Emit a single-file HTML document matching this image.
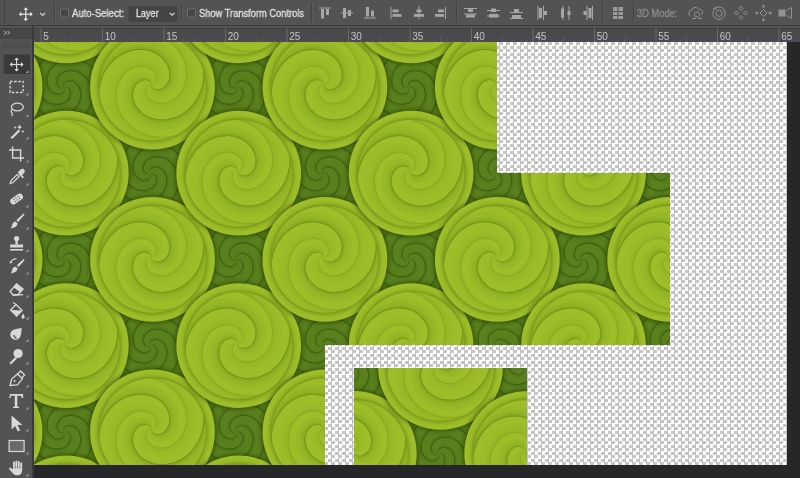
<!DOCTYPE html><html><head><meta charset="utf-8"><style>
html,body{margin:0;padding:0;width:800px;height:478px;overflow:hidden;background:#27272a;position:relative;font-family:"Liberation Sans",sans-serif}
.abs{position:absolute}
.chk{position:absolute;background:repeating-conic-gradient(#c4c4c4 0 25%,#ffffff 0 50%) 0 0/7px 7px}
</style></head><body>
<div class="abs" style="left:0;top:0;width:800px;height:25px;background:#535353"></div>
<div class="abs" style="left:0;top:25px;width:800px;height:1px;background:#3c3c3c"></div>
<div class="abs" style="left:0;top:26px;width:800px;height:2px;background:#555555"></div>
<div class="abs" style="left:0;top:28px;width:800px;height:1px;background:#3f3f3f"></div>
<div class="abs" style="left:34px;top:29px;width:766px;height:13px;background:#4a4a4a"></div>
<div class="abs" style="left:34px;top:36px;width:766px;height:2px;background:#4a4a52"></div>
<div class="abs" style="left:34px;top:40px;width:766px;height:2px;background:#49494f"></div>
<div class="abs" style="left:0;top:29px;width:33px;height:10px;background:#474747"></div>
<div class="abs" style="left:0;top:39px;width:32px;height:439px;background:#535353"></div>
<div class="abs" style="left:32px;top:26px;width:2px;height:452px;background:#3a3a3a"></div>
<svg width="800" height="25" style="position:absolute;left:0;top:0">
<rect x="4" y="1" width="1" height="23" fill="#404040"/>
<rect x="54" y="3" width="1" height="19" fill="#424242"/><rect x="55" y="3" width="1" height="19" fill="#5c5c5c"/>
<rect x="181" y="3" width="1" height="19" fill="#424242"/><rect x="182" y="3" width="1" height="19" fill="#5c5c5c"/>
<rect x="311" y="3" width="1" height="19" fill="#424242"/><rect x="312" y="3" width="1" height="19" fill="#5c5c5c"/>
<rect x="456" y="3" width="1" height="19" fill="#424242"/><rect x="457" y="3" width="1" height="19" fill="#5c5c5c"/>
<rect x="602" y="3" width="1" height="19" fill="#424242"/><rect x="603" y="3" width="1" height="19" fill="#5c5c5c"/>
<rect x="633" y="3" width="1" height="19" fill="#424242"/><rect x="634" y="3" width="1" height="19" fill="#5c5c5c"/>
<g fill="#e6e6e6"><rect x="19.8" y="13.6" width="12" height="1.2"/><rect x="25.2" y="8.2" width="1.2" height="12"/><path d="M18.8 14.2l2.6-2.4v4.8z M32.8 14.2l-2.6-2.4v4.8z M25.8 7.199999999999999l-2.4 2.6h4.8z M25.8 21.2l-2.4-2.6h4.8z"/></g>
<path d="M40.2 13l2.5 2.5 2.5-2.5" stroke="#cfcfcf" stroke-width="1.2" fill="none"/>
<rect x="60.5" y="9" width="8" height="8" rx="1" fill="#454545" stroke="#6e6e6e" stroke-width="1"/>
<rect x="187.5" y="9" width="8" height="8" rx="1" fill="#454545" stroke="#6e6e6e" stroke-width="1"/>
<rect x="128.5" y="6" width="49" height="16" rx="1.5" fill="#444444" stroke="#4c4c4c"/>
<path d="M169.8 12.8l2.4 2.4 2.4-2.4" stroke="#d6d6d6" stroke-width="1.2" fill="none"/>
<g fill="#a6a6a6"><rect x="319" y="7.5" width="12" height="1"/><rect x="321" y="9" width="3" height="9.5"/><rect x="326" y="9" width="3" height="6"/><rect x="341" y="12.5" width="12" height="1"/><rect x="343" y="8" width="3" height="10"/><rect x="348" y="10" width="3" height="6"/><rect x="364" y="17.5" width="12" height="1"/><rect x="366" y="7" width="3" height="9.5"/><rect x="371" y="10.5" width="3" height="6"/><rect x="390.5" y="7" width="1" height="12"/><rect x="392.5" y="9.5" width="6" height="2.8"/><rect x="392.5" y="14" width="9" height="2.8"/><rect x="418.5" y="6" width="1" height="13"/><rect x="416.5" y="9.5" width="5" height="2.8"/><rect x="414" y="14" width="10" height="2.8"/><rect x="445" y="7" width="1" height="12"/><rect x="438" y="9.5" width="6" height="2.8"/><rect x="435" y="14" width="9" height="2.8"/><rect x="464" y="8" width="13" height="1"/><rect x="468" y="9" width="5" height="3"/><rect x="464" y="13.5" width="13" height="1"/><rect x="466" y="14.5" width="9" height="3"/><rect x="487" y="10" width="13" height="1"/><rect x="491" y="8.5" width="5" height="3.5"/><rect x="487" y="15.5" width="13" height="1"/><rect x="489" y="14" width="9" height="3.5"/><rect x="510" y="12" width="13" height="1"/><rect x="514" y="9" width="5" height="3"/><rect x="510" y="18" width="13" height="1"/><rect x="512" y="15" width="9" height="3"/><rect x="537.5" y="6" width="1" height="14"/><rect x="539" y="8" width="3" height="10"/><rect x="543" y="6" width="1" height="14"/><rect x="544" y="11" width="3" height="4"/><rect x="562.5" y="6" width="1" height="14"/><rect x="561" y="8.5" width="3" height="9"/><rect x="568.5" y="6" width="1" height="14"/><rect x="567.5" y="11" width="3" height="4"/><rect x="592" y="6" width="1" height="14"/><rect x="588.5" y="8" width="3" height="10"/><rect x="586.5" y="6" width="1" height="14"/><rect x="583.5" y="11" width="3" height="4"/><rect x="613" y="7" width="10" height="12" fill="#9a9a9a"/><rect x="617.5" y="7" width="1" height="12" fill="#535353"/><rect x="613" y="11" width="10" height="1" fill="#535353"/><rect x="613" y="15" width="10" height="1" fill="#535353"/></g>
<g fill="none" stroke="#929292" stroke-width="1"><path d="M690.5 16a3.2 3.2 0 0 1 1.2-6a3.8 3.8 0 0 1 7-0.5a3 3 0 0 1 2.8 5.2"/><circle cx="697" cy="14.5" r="2.6"/><path d="M692 18.5h4 M698 18.5h4"/><circle cx="719" cy="13.2" r="6.2"/><circle cx="719" cy="13.2" r="3.2"/><path d="M713.5 8.5l2.5 0.5-0.5-2.5"/><path d="M741 6.5l2 2-2 2-2-2z M741 15.5l2 2-2 2-2-2z M736.5 11l2 2-2 2-2-2z M745.5 11l2 2-2 2-2-2z"/><path d="M763.5 9.5l3.5 3.5-3.5 3.5-3.5-3.5z M763.5 5v3 M763.5 18v3 M756 13h3 M768 13h3"/><path d="M786.5 10.5l5-3v11l-5-3"/></g>
<g fill="#929292"><path d="M763.5 4.5l-2 2h4z M763.5 21.5l-2-2h4z M755 13l2-2v4z M772 13l-2-2v4z"/><rect x="778.5" y="9.5" width="7" height="7"/></g>
</svg>
<div style="will-change:transform;position:absolute;left:72px;top:8.5px;-webkit-text-stroke:0.3px #e2e2e2;font-size:10px;line-height:10px;color:#e2e2e2;white-space:nowrap;transform-origin:0 0;transform:scaleX(0.9541);">Auto-Select:</div>
<div style="will-change:transform;position:absolute;left:136px;top:9.0px;-webkit-text-stroke:0.3px #e2e2e2;font-size:10px;line-height:10px;color:#e2e2e2;white-space:nowrap;transform-origin:0 0;transform:scaleX(0.9000);">Layer</div>
<div style="will-change:transform;position:absolute;left:198.7px;top:8.5px;-webkit-text-stroke:0.3px #e2e2e2;font-size:10px;line-height:10px;color:#e2e2e2;white-space:nowrap;transform-origin:0 0;transform:scaleX(0.9309);">Show Transform Controls</div>
<div style="will-change:transform;position:absolute;left:636.5px;top:8.5px;-webkit-text-stroke:0.3px #8e8e8e;font-size:10px;line-height:10px;color:#8e8e8e;white-space:nowrap;transform-origin:0 0;transform:scaleX(0.9309);">3D Mode:</div>
<svg width="33" height="13" style="position:absolute;left:0;top:26px"><path d="M4.3 5l1.8 1.8-1.8 1.8 M7.6 5l1.8 1.8-1.8 1.8" stroke="#c8c8c8" stroke-width="1" fill="none"/></svg>
<svg width="766" height="16" style="position:absolute;left:34px;top:26px;will-change:transform" viewBox="34 26 766 16">
<rect x="34.35" y="39" width="1" height="3" fill="#575757"/>
<rect x="40.50" y="28" width="1" height="14" fill="#6a6a6a"/>
<rect x="46.65" y="39" width="1" height="3" fill="#575757"/>
<rect x="52.80" y="39" width="1" height="3" fill="#575757"/>
<rect x="58.95" y="39" width="1" height="3" fill="#575757"/>
<rect x="65.10" y="39" width="1" height="3" fill="#575757"/>
<rect x="71.25" y="37" width="1" height="5" fill="#5c5c5c"/>
<rect x="77.40" y="39" width="1" height="3" fill="#575757"/>
<rect x="83.55" y="39" width="1" height="3" fill="#575757"/>
<rect x="89.70" y="39" width="1" height="3" fill="#575757"/>
<rect x="95.85" y="39" width="1" height="3" fill="#575757"/>
<text x="43.2" y="40" font-family="Liberation Sans" font-size="10" fill="#c4c4c4">5</text>
<rect x="102.00" y="28" width="1" height="14" fill="#6a6a6a"/>
<rect x="108.15" y="39" width="1" height="3" fill="#575757"/>
<rect x="114.30" y="39" width="1" height="3" fill="#575757"/>
<rect x="120.45" y="39" width="1" height="3" fill="#575757"/>
<rect x="126.60" y="39" width="1" height="3" fill="#575757"/>
<rect x="132.75" y="37" width="1" height="5" fill="#5c5c5c"/>
<rect x="138.90" y="39" width="1" height="3" fill="#575757"/>
<rect x="145.05" y="39" width="1" height="3" fill="#575757"/>
<rect x="151.20" y="39" width="1" height="3" fill="#575757"/>
<rect x="157.35" y="39" width="1" height="3" fill="#575757"/>
<text x="104.7" y="40" font-family="Liberation Sans" font-size="10" fill="#c4c4c4">10</text>
<rect x="163.50" y="28" width="1" height="14" fill="#6a6a6a"/>
<rect x="169.65" y="39" width="1" height="3" fill="#575757"/>
<rect x="175.80" y="39" width="1" height="3" fill="#575757"/>
<rect x="181.95" y="39" width="1" height="3" fill="#575757"/>
<rect x="188.10" y="39" width="1" height="3" fill="#575757"/>
<rect x="194.25" y="37" width="1" height="5" fill="#5c5c5c"/>
<rect x="200.40" y="39" width="1" height="3" fill="#575757"/>
<rect x="206.55" y="39" width="1" height="3" fill="#575757"/>
<rect x="212.70" y="39" width="1" height="3" fill="#575757"/>
<rect x="218.85" y="39" width="1" height="3" fill="#575757"/>
<text x="166.2" y="40" font-family="Liberation Sans" font-size="10" fill="#c4c4c4">15</text>
<rect x="225.00" y="28" width="1" height="14" fill="#6a6a6a"/>
<rect x="231.15" y="39" width="1" height="3" fill="#575757"/>
<rect x="237.30" y="39" width="1" height="3" fill="#575757"/>
<rect x="243.45" y="39" width="1" height="3" fill="#575757"/>
<rect x="249.60" y="39" width="1" height="3" fill="#575757"/>
<rect x="255.75" y="37" width="1" height="5" fill="#5c5c5c"/>
<rect x="261.90" y="39" width="1" height="3" fill="#575757"/>
<rect x="268.05" y="39" width="1" height="3" fill="#575757"/>
<rect x="274.20" y="39" width="1" height="3" fill="#575757"/>
<rect x="280.35" y="39" width="1" height="3" fill="#575757"/>
<text x="227.7" y="40" font-family="Liberation Sans" font-size="10" fill="#c4c4c4">20</text>
<rect x="286.50" y="28" width="1" height="14" fill="#6a6a6a"/>
<rect x="292.65" y="39" width="1" height="3" fill="#575757"/>
<rect x="298.80" y="39" width="1" height="3" fill="#575757"/>
<rect x="304.95" y="39" width="1" height="3" fill="#575757"/>
<rect x="311.10" y="39" width="1" height="3" fill="#575757"/>
<rect x="317.25" y="37" width="1" height="5" fill="#5c5c5c"/>
<rect x="323.40" y="39" width="1" height="3" fill="#575757"/>
<rect x="329.55" y="39" width="1" height="3" fill="#575757"/>
<rect x="335.70" y="39" width="1" height="3" fill="#575757"/>
<rect x="341.85" y="39" width="1" height="3" fill="#575757"/>
<text x="289.2" y="40" font-family="Liberation Sans" font-size="10" fill="#c4c4c4">25</text>
<rect x="348.00" y="28" width="1" height="14" fill="#6a6a6a"/>
<rect x="354.15" y="39" width="1" height="3" fill="#575757"/>
<rect x="360.30" y="39" width="1" height="3" fill="#575757"/>
<rect x="366.45" y="39" width="1" height="3" fill="#575757"/>
<rect x="372.60" y="39" width="1" height="3" fill="#575757"/>
<rect x="378.75" y="37" width="1" height="5" fill="#5c5c5c"/>
<rect x="384.90" y="39" width="1" height="3" fill="#575757"/>
<rect x="391.05" y="39" width="1" height="3" fill="#575757"/>
<rect x="397.20" y="39" width="1" height="3" fill="#575757"/>
<rect x="403.35" y="39" width="1" height="3" fill="#575757"/>
<text x="350.7" y="40" font-family="Liberation Sans" font-size="10" fill="#c4c4c4">30</text>
<rect x="409.50" y="28" width="1" height="14" fill="#6a6a6a"/>
<rect x="415.65" y="39" width="1" height="3" fill="#575757"/>
<rect x="421.80" y="39" width="1" height="3" fill="#575757"/>
<rect x="427.95" y="39" width="1" height="3" fill="#575757"/>
<rect x="434.10" y="39" width="1" height="3" fill="#575757"/>
<rect x="440.25" y="37" width="1" height="5" fill="#5c5c5c"/>
<rect x="446.40" y="39" width="1" height="3" fill="#575757"/>
<rect x="452.55" y="39" width="1" height="3" fill="#575757"/>
<rect x="458.70" y="39" width="1" height="3" fill="#575757"/>
<rect x="464.85" y="39" width="1" height="3" fill="#575757"/>
<text x="412.2" y="40" font-family="Liberation Sans" font-size="10" fill="#c4c4c4">35</text>
<rect x="471.00" y="28" width="1" height="14" fill="#6a6a6a"/>
<rect x="477.15" y="39" width="1" height="3" fill="#575757"/>
<rect x="483.30" y="39" width="1" height="3" fill="#575757"/>
<rect x="489.45" y="39" width="1" height="3" fill="#575757"/>
<rect x="495.60" y="39" width="1" height="3" fill="#575757"/>
<rect x="501.75" y="37" width="1" height="5" fill="#5c5c5c"/>
<rect x="507.90" y="39" width="1" height="3" fill="#575757"/>
<rect x="514.05" y="39" width="1" height="3" fill="#575757"/>
<rect x="520.20" y="39" width="1" height="3" fill="#575757"/>
<rect x="526.35" y="39" width="1" height="3" fill="#575757"/>
<text x="473.7" y="40" font-family="Liberation Sans" font-size="10" fill="#c4c4c4">40</text>
<rect x="532.50" y="28" width="1" height="14" fill="#6a6a6a"/>
<rect x="538.65" y="39" width="1" height="3" fill="#575757"/>
<rect x="544.80" y="39" width="1" height="3" fill="#575757"/>
<rect x="550.95" y="39" width="1" height="3" fill="#575757"/>
<rect x="557.10" y="39" width="1" height="3" fill="#575757"/>
<rect x="563.25" y="37" width="1" height="5" fill="#5c5c5c"/>
<rect x="569.40" y="39" width="1" height="3" fill="#575757"/>
<rect x="575.55" y="39" width="1" height="3" fill="#575757"/>
<rect x="581.70" y="39" width="1" height="3" fill="#575757"/>
<rect x="587.85" y="39" width="1" height="3" fill="#575757"/>
<text x="535.2" y="40" font-family="Liberation Sans" font-size="10" fill="#c4c4c4">45</text>
<rect x="594.00" y="28" width="1" height="14" fill="#6a6a6a"/>
<rect x="600.15" y="39" width="1" height="3" fill="#575757"/>
<rect x="606.30" y="39" width="1" height="3" fill="#575757"/>
<rect x="612.45" y="39" width="1" height="3" fill="#575757"/>
<rect x="618.60" y="39" width="1" height="3" fill="#575757"/>
<rect x="624.75" y="37" width="1" height="5" fill="#5c5c5c"/>
<rect x="630.90" y="39" width="1" height="3" fill="#575757"/>
<rect x="637.05" y="39" width="1" height="3" fill="#575757"/>
<rect x="643.20" y="39" width="1" height="3" fill="#575757"/>
<rect x="649.35" y="39" width="1" height="3" fill="#575757"/>
<text x="596.7" y="40" font-family="Liberation Sans" font-size="10" fill="#c4c4c4">50</text>
<rect x="655.50" y="28" width="1" height="14" fill="#6a6a6a"/>
<rect x="661.65" y="39" width="1" height="3" fill="#575757"/>
<rect x="667.80" y="39" width="1" height="3" fill="#575757"/>
<rect x="673.95" y="39" width="1" height="3" fill="#575757"/>
<rect x="680.10" y="39" width="1" height="3" fill="#575757"/>
<rect x="686.25" y="37" width="1" height="5" fill="#5c5c5c"/>
<rect x="692.40" y="39" width="1" height="3" fill="#575757"/>
<rect x="698.55" y="39" width="1" height="3" fill="#575757"/>
<rect x="704.70" y="39" width="1" height="3" fill="#575757"/>
<rect x="710.85" y="39" width="1" height="3" fill="#575757"/>
<text x="658.2" y="40" font-family="Liberation Sans" font-size="10" fill="#c4c4c4">55</text>
<rect x="717.00" y="28" width="1" height="14" fill="#6a6a6a"/>
<rect x="723.15" y="39" width="1" height="3" fill="#575757"/>
<rect x="729.30" y="39" width="1" height="3" fill="#575757"/>
<rect x="735.45" y="39" width="1" height="3" fill="#575757"/>
<rect x="741.60" y="39" width="1" height="3" fill="#575757"/>
<rect x="747.75" y="37" width="1" height="5" fill="#5c5c5c"/>
<rect x="753.90" y="39" width="1" height="3" fill="#575757"/>
<rect x="760.05" y="39" width="1" height="3" fill="#575757"/>
<rect x="766.20" y="39" width="1" height="3" fill="#575757"/>
<rect x="772.35" y="39" width="1" height="3" fill="#575757"/>
<text x="719.7" y="40" font-family="Liberation Sans" font-size="10" fill="#c4c4c4">60</text>
<rect x="778.50" y="28" width="1" height="14" fill="#6a6a6a"/>
<rect x="784.65" y="39" width="1" height="3" fill="#575757"/>
<rect x="790.80" y="39" width="1" height="3" fill="#575757"/>
<rect x="796.95" y="39" width="1" height="3" fill="#575757"/>
<text x="781.2" y="40" font-family="Liberation Sans" font-size="10" fill="#c4c4c4">65</text>
</svg>
<svg width="32" height="439" style="position:absolute;left:0;top:39px" viewBox="0 39 32 439">
<rect x="3.7" y="54.5" width="26.3" height="19.5" rx="1" fill="#3a3a3a"/>
<rect x="2" y="43" width="28" height="5" fill="#4e4e4e"/>
<g transform="translate(16.6 64.5)"><g fill="#d8d8d8"><rect x="-6" y="-0.6" width="12" height="1.2"/><rect x="-0.6" y="-6" width="1.2" height="12"/><path d="M-7 0l2.6-2.4v4.8z M7 0l-2.6-2.4v4.8z M0 -7l-2.4 2.6h4.8z M0 7l-2.4-2.6h4.8z"/></g></g>
<path d="M28.6 70.1v3h-3z" fill="#9a9a9a"/>
<g transform="translate(16.6 87)"><rect x="-6.5" y="-5.5" width="13" height="11" fill="none" stroke="#d8d8d8" stroke-width="1.3" stroke-dasharray="2.5 1.6"/></g>
<path d="M28.6 92.6v3h-3z" fill="#9a9a9a"/>
<g transform="translate(16.6 108.5)"><g fill="none" stroke="#d8d8d8" stroke-width="1.2"><ellipse cx="0.8" cy="-1.5" rx="6" ry="3.8"/><path d="M-4.5 1 q-2 2 0 3.5 q1 1.5 -0.5 3"/></g></g>
<path d="M28.6 114.1v3h-3z" fill="#9a9a9a"/>
<g transform="translate(16.6 131)"><g fill="#d8d8d8"><path d="M-6 6.5l8-8 1.6 1.6-8 8z"/><path d="M3 -6.5l0.8 1.8 1.8 0.8-1.8 0.8-0.8 1.8-0.8-1.8-1.8-0.8 1.8-0.8z M6.3 -1l0.5 1 1 .5-1 .5-.5 1-.5-1-1-.5 1-.5z M-1.5 -5l.5 1 1 .5-1 .5-.5 1-.5-1-1-.5 1-.5z"/></g></g>
<path d="M28.6 136.6v3h-3z" fill="#9a9a9a"/>
<g transform="translate(16.6 154)"><g fill="none" stroke="#d8d8d8" stroke-width="1.4"><path d="M-4 -7.5v11.5h11.5 M-7.5 -4h11.5v11.5"/></g></g>
<path d="M28.6 159.6v3h-3z" fill="#9a9a9a"/>
<g transform="translate(16.6 177)"><g fill="#d8d8d8"><path d="M-6.5 6.5l1-3 6-6 2 2-6 6z" fill="none" stroke="#d8d8d8" stroke-width="1.2"/><path d="M1 -4.5l3-3a1.6 1.6 0 0 1 3.5 3.5l-3 3z"/><rect x="-0.5" y="-5" width="6" height="1.6" transform="rotate(45)"/></g></g>
<path d="M28.6 182.6v3h-3z" fill="#9a9a9a"/>
<g transform="translate(16.6 199)"><g transform="rotate(-35)" fill="#d8d8d8"><rect x="-7" y="-3.2" width="14" height="6.4" rx="3"/><g fill="#535353"><rect x="-3.2" y="-1.8" width="1.2" height="1.2"/><rect x="-0.6" y="-1.8" width="1.2" height="1.2"/><rect x="2" y="-1.8" width="1.2" height="1.2"/><rect x="-3.2" y="0.6" width="1.2" height="1.2"/><rect x="-0.6" y="0.6" width="1.2" height="1.2"/><rect x="2" y="0.6" width="1.2" height="1.2"/></g></g></g>
<path d="M28.6 204.6v3h-3z" fill="#9a9a9a"/>
<g transform="translate(16.6 221)"><g fill="#d8d8d8"><path d="M7 -7.5l1 1-6.5 7.5-1.8-1.8z"/><path d="M-0.8 0.8l1.8 1.8c-.5 3-3 4.5-7 4.8c1.5-1.3 1.2-3.5 2.2-5.2c1-1.3 2-1.6 3-1.4z"/></g></g>
<path d="M28.6 226.6v3h-3z" fill="#9a9a9a"/>
<g transform="translate(16.6 243.5)"><g fill="#d8d8d8"><circle cx="0" cy="-5" r="2.6"/><rect x="-1.2" y="-3" width="2.4" height="4"/><path d="M-6.5 1h13v3h-13z"/><rect x="-6.5" y="5.5" width="13" height="1.6"/></g></g>
<path d="M28.6 249.1v3h-3z" fill="#9a9a9a"/>
<g transform="translate(16.6 266)"><g fill="#d8d8d8"><path d="M7 -7l1 1-6 7-1.8-1.8z"/><path d="M-0.8 0.8l1.8 1.8c-.5 3-3 4.5-7 4.8c1.5-1.3 1.2-3.5 2.2-5.2c1-1.3 2-1.6 3-1.4z"/><path d="M-6 -3a5 5 0 0 1 6-4" fill="none" stroke="#d8d8d8" stroke-width="1.1"/><path d="M-7.5 -4.5l1.5 2.2 2-1.6z"/></g></g>
<path d="M28.6 271.6v3h-3z" fill="#9a9a9a"/>
<g transform="translate(16.6 289)"><g fill="none" stroke="#d8d8d8" stroke-width="1.3"><path d="M-6.5 2.5l6.5-7.5 6.5 5-5.5 6h-4.5z"/><path d="M-4 5.8h10.5"/></g><path d="M0 -5l6.5 5-3 3.3-6.5-5z" fill="#d8d8d8"/></g>
<path d="M28.6 294.6v3h-3z" fill="#9a9a9a"/>
<g transform="translate(16.6 311)"><g fill="none" stroke="#d8d8d8" stroke-width="1.3"><path d="M-6 -1l5.5-5.5 6 6-5.5 5.5z"/><path d="M-3.5 -8.5l3 2"/></g><path d="M-6 -1l11.5 0.5-5.5 5z" fill="#d8d8d8"/><path d="M6.5 2.5c1 1.8 1.6 2.8 1.6 3.6a1.6 1.6 0 0 1-3.2 0c0-.8.6-1.8 1.6-3.6z" fill="#d8d8d8"/></g>
<path d="M28.6 316.6v3h-3z" fill="#9a9a9a"/>
<g transform="translate(16.6 333.5)"><g fill="#d8d8d8"><path d="M1 -7.5c-3 3-6.5 6-6.5 9a5.2 5.2 0 0 0 10.4 0c0-2.2-1.5-5-3.9-9z" transform="rotate(35)"/></g><path d="M-3 1.5c.5 2 1.5 2.8 3 3.2" stroke="#535353" stroke-width="1.2" fill="none"/></g>
<path d="M28.6 339.1v3h-3z" fill="#9a9a9a"/>
<g transform="translate(16.6 356)"><g fill="#d8d8d8"><circle cx="1.5" cy="-2.5" r="4.6"/><path d="M-1.2 1l1.6 1.6-6 6-1.6-1.6z"/></g></g>
<path d="M28.6 361.6v3h-3z" fill="#9a9a9a"/>
<g transform="translate(16.6 379)"><g fill="none" stroke="#d8d8d8" stroke-width="1.3"><path d="M-6.5 6.5l1.5-6.5 6-5 4.8 4.8-5 6z"/><path d="M1 -5l3-3 4 4-3 3"/></g><circle cx="-2" cy="2" r="1" fill="#d8d8d8"/></g>
<path d="M28.6 384.6v3h-3z" fill="#9a9a9a"/>
<g transform="translate(16.6 401)"><g fill="#d8d8d8"><path d="M-6.5 -7h13v4h-1.4l-.6-2.2h-3.8v10.6l1.8.6v1h-6.1v-1l1.8-.6v-10.6h-3.8l-.6 2.2h-1.3z"/></g></g>
<path d="M28.6 406.6v3h-3z" fill="#9a9a9a"/>
<g transform="translate(16.6 423)"><path d="M-5 -7.5v14l3.5-3.5 2.8 5.5 2.3-1.2-2.8-5.3h5z" fill="#d8d8d8"/></g>
<path d="M28.6 428.6v3h-3z" fill="#9a9a9a"/>
<g transform="translate(16.6 446)"><rect x="-7.5" y="-5.5" width="15" height="11" fill="#6a6a6a" stroke="#d8d8d8" stroke-width="1.2"/></g>
<path d="M28.6 451.6v3h-3z" fill="#9a9a9a"/>
<g transform="translate(16.6 468)"><g fill="#d8d8d8"><rect x="-3.6" y="-6.5" width="1.9" height="8" rx="0.95"/><rect x="-1.2" y="-7.5" width="1.9" height="9" rx="0.95"/><rect x="1.2" y="-7" width="1.9" height="8.5" rx="0.95"/><rect x="3.6" y="-5.5" width="1.9" height="7.5" rx="0.95"/><path d="M-3.6 0h9.1v2.5c0 2.8-1.8 4.8-4.5 4.8h-1.2c-1.6 0-2.6-.8-3.6-2l-3.6-4.2c-.7-.9.3-1.9 1.2-1.3l2.6 1.8z"/></g><path d="M-1.7 -1.5v2 M0.7 -1.5v2 M3.1 -1.5v2" stroke="#535353" stroke-width="0.5"/></g>
<path d="M28.6 473.6v3h-3z" fill="#9a9a9a"/>
</svg>
<svg width="753" height="423" viewBox="34 42 753 423" style="position:absolute;left:34px;top:42px">
<defs>
<filter id="bl" x="-20%" y="-20%" width="140%" height="140%"><feGaussianBlur stdDeviation="2.2"/></filter>
<clipPath id="cpd"><circle r="62.0"/></clipPath>
<clipPath id="cps"><circle r="53.5"/></clipPath>
<g id="drk">
<circle r="62.0" fill="#59801d"/>

<g clip-path="url(#cpd)"><g transform="translate(-2.5 0.5)" fill="#1c2c00">
<path d="M0.0 0.0L0.5 0.5L0.9 1.2L1.2 1.9L1.3 2.7L1.3 3.5L1.1 4.3L0.8 5.1L0.3 5.9L-0.3 6.7L-1.0 7.4L-1.9 8.0L-2.9 8.4L-4.0 8.8L-5.2 9.0L-6.5 9.1L-7.9 8.9L-9.2 8.6L-10.6 8.2L-12.0 7.5L-13.3 6.6L-14.6 5.6L-15.8 4.3L-16.9 2.9L-17.8 1.3L-18.6 -0.5L-19.2 -2.4L-19.6 -4.4L-19.8 -6.5L-19.7 -8.7L-19.4 -11.0L-18.9 -13.2L-18.1 -15.5L-17.0 -17.7L-15.7 -19.9L-14.1 -21.9L-12.2 -23.8L-10.1 -25.6L-7.8 -27.2L-5.2 -28.5L-2.5 -29.7L0.4 -30.5L3.5 -31.1L6.6 -31.3L9.9 -31.2L13.1 -30.8L16.4 -30.0L19.7 -28.9L22.9 -27.4L26.0 -25.6L28.9 -23.4L31.7 -20.9L34.2 -18.1L36.5 -14.9L38.5 -11.5L40.2 -7.9L41.5 -4.0L42.4 0.0L42.9 4.2L43.1 8.5L42.7 12.9L42.0 17.3L40.7 21.6L39.1 25.9L36.9 30.0L34.4 34.0L31.4 37.8L28.0 41.3L24.2 44.4L20.0 47.3L15.6 49.7L10.8 51.7L5.8 53.3L0.6 54.3L-4.7 54.9L-10.2 54.9L-15.7 54.3L-21.1 53.2L-26.6 51.6L-31.9 49.4L-37.0 46.6L-41.8 43.4L-46.4 39.6L-50.7 35.3L-54.5 30.6L-57.9 25.4L-60.8 19.9L-63.2 14.1L-65.0 7.9L-66.2 1.6L-66.8 -4.9L-66.4 -8.8L-65.7 -12.7L-64.9 -16.6L-63.8 -20.4L-62.5 -24.1L-61.0 -27.7L-59.2 -31.3L-57.3 -34.7L-57.3 -34.7L-59.7 -28.6L-61.5 -22.4L-62.7 -16.2L-63.2 -9.9L-63.1 -3.6L-62.4 2.5L-61.2 8.4L-59.3 14.2L-57.0 19.6L-54.1 24.8L-50.8 29.5L-47.1 33.9L-43.0 37.8L-38.6 41.3L-34.0 44.3L-29.1 46.7L-24.1 48.7L-19.0 50.1L-13.8 51.0L-8.7 51.4L-3.6 51.2L1.4 50.6L6.2 49.5L10.8 47.9L15.2 45.9L19.3 43.5L23.1 40.8L26.5 37.8L29.5 34.4L32.2 30.9L34.5 27.2L36.3 23.3L37.8 19.3L38.8 15.3L39.4 11.2L39.5 7.2L39.3 3.3L38.7 -0.6L37.7 -4.2L36.4 -7.7L34.8 -11.0L32.8 -14.0L30.7 -16.8L28.3 -19.3L25.7 -21.5L23.0 -23.3L20.1 -24.9L17.2 -26.1L14.2 -27.0L11.2 -27.6L8.3 -27.8L5.4 -27.7L2.6 -27.4L-0.1 -26.8L-2.6 -25.9L-4.9 -24.8L-7.1 -23.5L-9.1 -22.0L-10.8 -20.4L-12.4 -18.6L-13.6 -16.7L-14.7 -14.8L-15.5 -12.8L-16.0 -10.8L-16.3 -8.9L-16.4 -7.0L-16.3 -5.1L-16.0 -3.3L-15.5 -1.7L-14.9 -0.2L-14.1 1.2L-13.2 2.5L-12.1 3.5L-11.1 4.4L-9.9 5.1L-8.7 5.7L-7.6 6.0L-6.4 6.2L-5.3 6.2L-4.2 6.1L-3.3 5.8L-2.4 5.5L-1.6 5.0L-1.0 4.4L-0.4 3.7L-0.1 3.0L0.2 2.2L0.3 1.5L0.2 0.7L0.0 0.0ZM-0.0 0.0L-0.5 0.5L-1.2 0.9L-1.9 1.2L-2.7 1.3L-3.5 1.3L-4.3 1.1L-5.1 0.8L-5.9 0.3L-6.7 -0.3L-7.4 -1.0L-8.0 -1.9L-8.4 -2.9L-8.8 -4.0L-9.0 -5.2L-9.1 -6.5L-8.9 -7.9L-8.6 -9.2L-8.2 -10.6L-7.5 -12.0L-6.6 -13.3L-5.6 -14.6L-4.3 -15.8L-2.9 -16.9L-1.3 -17.8L0.5 -18.6L2.4 -19.2L4.4 -19.6L6.5 -19.8L8.7 -19.7L11.0 -19.4L13.2 -18.9L15.5 -18.1L17.7 -17.0L19.9 -15.7L21.9 -14.1L23.8 -12.2L25.6 -10.1L27.2 -7.8L28.5 -5.2L29.7 -2.5L30.5 0.4L31.1 3.5L31.3 6.6L31.2 9.9L30.8 13.1L30.0 16.4L28.9 19.7L27.4 22.9L25.6 26.0L23.4 28.9L20.9 31.7L18.1 34.2L14.9 36.5L11.5 38.5L7.9 40.2L4.0 41.5L-0.0 42.4L-4.2 42.9L-8.5 43.1L-12.9 42.7L-17.3 42.0L-21.6 40.7L-25.9 39.1L-30.0 36.9L-34.0 34.4L-37.8 31.4L-41.3 28.0L-44.4 24.2L-47.3 20.0L-49.7 15.6L-51.7 10.8L-53.3 5.8L-54.3 0.6L-54.9 -4.7L-54.9 -10.2L-54.3 -15.7L-53.2 -21.1L-51.6 -26.6L-49.4 -31.9L-46.6 -37.0L-43.4 -41.8L-39.6 -46.4L-35.3 -50.7L-30.6 -54.5L-25.4 -57.9L-19.9 -60.8L-14.1 -63.2L-7.9 -65.0L-1.6 -66.2L4.9 -66.8L8.8 -66.4L12.7 -65.7L16.6 -64.9L20.4 -63.8L24.1 -62.5L27.7 -61.0L31.3 -59.2L34.7 -57.3L34.7 -57.3L28.6 -59.7L22.4 -61.5L16.2 -62.7L9.9 -63.2L3.6 -63.1L-2.5 -62.4L-8.4 -61.2L-14.2 -59.3L-19.6 -57.0L-24.8 -54.1L-29.5 -50.8L-33.9 -47.1L-37.8 -43.0L-41.3 -38.6L-44.3 -34.0L-46.7 -29.1L-48.7 -24.1L-50.1 -19.0L-51.0 -13.8L-51.4 -8.7L-51.2 -3.6L-50.6 1.4L-49.5 6.2L-47.9 10.8L-45.9 15.2L-43.5 19.3L-40.8 23.1L-37.8 26.5L-34.4 29.5L-30.9 32.2L-27.2 34.5L-23.3 36.3L-19.3 37.8L-15.3 38.8L-11.2 39.4L-7.2 39.5L-3.3 39.3L0.6 38.7L4.2 37.7L7.7 36.4L11.0 34.8L14.0 32.8L16.8 30.7L19.3 28.3L21.5 25.7L23.3 23.0L24.9 20.1L26.1 17.2L27.0 14.2L27.6 11.2L27.8 8.3L27.7 5.4L27.4 2.6L26.8 -0.1L25.9 -2.6L24.8 -4.9L23.5 -7.1L22.0 -9.1L20.4 -10.8L18.6 -12.4L16.7 -13.6L14.8 -14.7L12.8 -15.5L10.8 -16.0L8.9 -16.3L7.0 -16.4L5.1 -16.3L3.3 -16.0L1.7 -15.5L0.2 -14.9L-1.2 -14.1L-2.5 -13.2L-3.5 -12.1L-4.4 -11.1L-5.1 -9.9L-5.7 -8.7L-6.0 -7.6L-6.2 -6.4L-6.2 -5.3L-6.1 -4.2L-5.8 -3.3L-5.5 -2.4L-5.0 -1.6L-4.4 -1.0L-3.7 -0.4L-3.0 -0.1L-2.2 0.2L-1.5 0.3L-0.7 0.2L-0.0 0.0ZM-0.0 -0.0L-0.5 -0.5L-0.9 -1.2L-1.2 -1.9L-1.3 -2.7L-1.3 -3.5L-1.1 -4.3L-0.8 -5.1L-0.3 -5.9L0.3 -6.7L1.0 -7.4L1.9 -8.0L2.9 -8.4L4.0 -8.8L5.2 -9.0L6.5 -9.1L7.9 -8.9L9.2 -8.6L10.6 -8.2L12.0 -7.5L13.3 -6.6L14.6 -5.6L15.8 -4.3L16.9 -2.9L17.8 -1.3L18.6 0.5L19.2 2.4L19.6 4.4L19.8 6.5L19.7 8.7L19.4 11.0L18.9 13.2L18.1 15.5L17.0 17.7L15.7 19.9L14.1 21.9L12.2 23.8L10.1 25.6L7.8 27.2L5.2 28.5L2.5 29.7L-0.4 30.5L-3.5 31.1L-6.6 31.3L-9.9 31.2L-13.1 30.8L-16.4 30.0L-19.7 28.9L-22.9 27.4L-26.0 25.6L-28.9 23.4L-31.7 20.9L-34.2 18.1L-36.5 14.9L-38.5 11.5L-40.2 7.9L-41.5 4.0L-42.4 -0.0L-42.9 -4.2L-43.1 -8.5L-42.7 -12.9L-42.0 -17.3L-40.7 -21.6L-39.1 -25.9L-36.9 -30.0L-34.4 -34.0L-31.4 -37.8L-28.0 -41.3L-24.2 -44.4L-20.0 -47.3L-15.6 -49.7L-10.8 -51.7L-5.8 -53.3L-0.6 -54.3L4.7 -54.9L10.2 -54.9L15.7 -54.3L21.1 -53.2L26.6 -51.6L31.9 -49.4L37.0 -46.6L41.8 -43.4L46.4 -39.6L50.7 -35.3L54.5 -30.6L57.9 -25.4L60.8 -19.9L63.2 -14.1L65.0 -7.9L66.2 -1.6L66.8 4.9L66.4 8.8L65.7 12.7L64.9 16.6L63.8 20.4L62.5 24.1L61.0 27.7L59.2 31.3L57.3 34.7L57.3 34.7L59.7 28.6L61.5 22.4L62.7 16.2L63.2 9.9L63.1 3.6L62.4 -2.5L61.2 -8.4L59.3 -14.2L57.0 -19.6L54.1 -24.8L50.8 -29.5L47.1 -33.9L43.0 -37.8L38.6 -41.3L34.0 -44.3L29.1 -46.7L24.1 -48.7L19.0 -50.1L13.8 -51.0L8.7 -51.4L3.6 -51.2L-1.4 -50.6L-6.2 -49.5L-10.8 -47.9L-15.2 -45.9L-19.3 -43.5L-23.1 -40.8L-26.5 -37.8L-29.5 -34.4L-32.2 -30.9L-34.5 -27.2L-36.3 -23.3L-37.8 -19.3L-38.8 -15.3L-39.4 -11.2L-39.5 -7.2L-39.3 -3.3L-38.7 0.6L-37.7 4.2L-36.4 7.7L-34.8 11.0L-32.8 14.0L-30.7 16.8L-28.3 19.3L-25.7 21.5L-23.0 23.3L-20.1 24.9L-17.2 26.1L-14.2 27.0L-11.2 27.6L-8.3 27.8L-5.4 27.7L-2.6 27.4L0.1 26.8L2.6 25.9L4.9 24.8L7.1 23.5L9.1 22.0L10.8 20.4L12.4 18.6L13.6 16.7L14.7 14.8L15.5 12.8L16.0 10.8L16.3 8.9L16.4 7.0L16.3 5.1L16.0 3.3L15.5 1.7L14.9 0.2L14.1 -1.2L13.2 -2.5L12.1 -3.5L11.1 -4.4L9.9 -5.1L8.7 -5.7L7.6 -6.0L6.4 -6.2L5.3 -6.2L4.2 -6.1L3.3 -5.8L2.4 -5.5L1.6 -5.0L1.0 -4.4L0.4 -3.7L0.1 -3.0L-0.2 -2.2L-0.3 -1.5L-0.2 -0.7L-0.0 -0.0ZM0.0 -0.0L0.5 -0.5L1.2 -0.9L1.9 -1.2L2.7 -1.3L3.5 -1.3L4.3 -1.1L5.1 -0.8L5.9 -0.3L6.7 0.3L7.4 1.0L8.0 1.9L8.4 2.9L8.8 4.0L9.0 5.2L9.1 6.5L8.9 7.9L8.6 9.2L8.2 10.6L7.5 12.0L6.6 13.3L5.6 14.6L4.3 15.8L2.9 16.9L1.3 17.8L-0.5 18.6L-2.4 19.2L-4.4 19.6L-6.5 19.8L-8.7 19.7L-11.0 19.4L-13.2 18.9L-15.5 18.1L-17.7 17.0L-19.9 15.7L-21.9 14.1L-23.8 12.2L-25.6 10.1L-27.2 7.8L-28.5 5.2L-29.7 2.5L-30.5 -0.4L-31.1 -3.5L-31.3 -6.6L-31.2 -9.9L-30.8 -13.1L-30.0 -16.4L-28.9 -19.7L-27.4 -22.9L-25.6 -26.0L-23.4 -28.9L-20.9 -31.7L-18.1 -34.2L-14.9 -36.5L-11.5 -38.5L-7.9 -40.2L-4.0 -41.5L0.0 -42.4L4.2 -42.9L8.5 -43.1L12.9 -42.7L17.3 -42.0L21.6 -40.7L25.9 -39.1L30.0 -36.9L34.0 -34.4L37.8 -31.4L41.3 -28.0L44.4 -24.2L47.3 -20.0L49.7 -15.6L51.7 -10.8L53.3 -5.8L54.3 -0.6L54.9 4.7L54.9 10.2L54.3 15.7L53.2 21.1L51.6 26.6L49.4 31.9L46.6 37.0L43.4 41.8L39.6 46.4L35.3 50.7L30.6 54.5L25.4 57.9L19.9 60.8L14.1 63.2L7.9 65.0L1.6 66.2L-4.9 66.8L-8.8 66.4L-12.7 65.7L-16.6 64.9L-20.4 63.8L-24.1 62.5L-27.7 61.0L-31.3 59.2L-34.7 57.3L-34.7 57.3L-28.6 59.7L-22.4 61.5L-16.2 62.7L-9.9 63.2L-3.6 63.1L2.5 62.4L8.4 61.2L14.2 59.3L19.6 57.0L24.8 54.1L29.5 50.8L33.9 47.1L37.8 43.0L41.3 38.6L44.3 34.0L46.7 29.1L48.7 24.1L50.1 19.0L51.0 13.8L51.4 8.7L51.2 3.6L50.6 -1.4L49.5 -6.2L47.9 -10.8L45.9 -15.2L43.5 -19.3L40.8 -23.1L37.8 -26.5L34.4 -29.5L30.9 -32.2L27.2 -34.5L23.3 -36.3L19.3 -37.8L15.3 -38.8L11.2 -39.4L7.2 -39.5L3.3 -39.3L-0.6 -38.7L-4.2 -37.7L-7.7 -36.4L-11.0 -34.8L-14.0 -32.8L-16.8 -30.7L-19.3 -28.3L-21.5 -25.7L-23.3 -23.0L-24.9 -20.1L-26.1 -17.2L-27.0 -14.2L-27.6 -11.2L-27.8 -8.3L-27.7 -5.4L-27.4 -2.6L-26.8 0.1L-25.9 2.6L-24.8 4.9L-23.5 7.1L-22.0 9.1L-20.4 10.8L-18.6 12.4L-16.7 13.6L-14.8 14.7L-12.8 15.5L-10.8 16.0L-8.9 16.3L-7.0 16.4L-5.1 16.3L-3.3 16.0L-1.7 15.5L-0.2 14.9L1.2 14.1L2.5 13.2L3.5 12.1L4.4 11.1L5.1 9.9L5.7 8.7L6.0 7.6L6.2 6.4L6.2 5.3L6.1 4.2L5.8 3.3L5.5 2.4L5.0 1.6L4.4 1.0L3.7 0.4L3.0 0.1L2.2 -0.2L1.5 -0.3L0.7 -0.2L0.0 -0.0Z" fill-opacity="0.06"/>
<path d="M0.0 0.0L0.4 0.7L0.6 1.4L0.7 2.1L0.6 2.9L0.4 3.7L0.1 4.5L-0.4 5.2L-1.0 5.9L-1.8 6.4L-2.7 6.9L-3.7 7.3L-4.8 7.5L-6.0 7.6L-7.2 7.5L-8.4 7.3L-9.7 6.9L-11.0 6.3L-12.2 5.5L-13.4 4.5L-14.5 3.3L-15.5 2.0L-16.4 0.5L-17.1 -1.1L-17.6 -2.9L-18.0 -4.8L-18.1 -6.8L-18.0 -8.9L-17.7 -11.0L-17.2 -13.1L-16.4 -15.2L-15.3 -17.3L-14.0 -19.3L-12.4 -21.2L-10.6 -23.0L-8.6 -24.6L-6.3 -26.0L-3.9 -27.3L-1.2 -28.2L1.6 -29.0L4.5 -29.4L7.5 -29.6L10.6 -29.4L13.7 -28.9L16.9 -28.1L20.0 -26.9L23.0 -25.4L25.9 -23.5L28.6 -21.3L31.2 -18.8L33.6 -16.0L35.7 -12.9L37.5 -9.6L39.0 -6.0L40.1 -2.2L40.9 1.7L41.3 5.8L41.2 9.9L40.8 14.1L39.9 18.4L38.5 22.5L36.8 26.6L34.6 30.5L31.9 34.3L28.9 37.8L25.5 41.1L21.7 44.1L17.6 46.6L13.1 48.9L8.5 50.6L3.5 52.0L-1.5 52.8L-6.8 53.1L-12.1 53.0L-17.4 52.2L-22.7 51.0L-27.9 49.2L-33.0 46.8L-37.9 44.0L-42.5 40.6L-46.8 36.7L-50.8 32.4L-54.4 27.6L-57.5 22.5L-60.1 17.0L-62.2 11.2L-63.8 5.2L-64.7 -1.1L-65.0 -7.5L-64.7 -13.9L-63.8 -20.4L-63.2 -22.2L-62.5 -24.1L-61.7 -25.9L-61.0 -27.7L-60.1 -29.5L-59.2 -31.3L-58.3 -33.0L-57.3 -34.7L-57.3 -34.7L-59.7 -28.6L-61.5 -22.4L-62.7 -16.2L-63.2 -9.9L-63.1 -3.6L-62.4 2.5L-61.2 8.4L-59.3 14.2L-57.0 19.6L-54.1 24.8L-50.8 29.5L-47.1 33.9L-43.0 37.8L-38.6 41.3L-34.0 44.3L-29.1 46.7L-24.1 48.7L-19.0 50.1L-13.8 51.0L-8.7 51.4L-3.6 51.2L1.4 50.6L6.2 49.5L10.8 47.9L15.2 45.9L19.3 43.5L23.1 40.8L26.5 37.8L29.5 34.4L32.2 30.9L34.5 27.2L36.3 23.3L37.8 19.3L38.8 15.3L39.4 11.2L39.5 7.2L39.3 3.3L38.7 -0.6L37.7 -4.2L36.4 -7.7L34.8 -11.0L32.8 -14.0L30.7 -16.8L28.3 -19.3L25.7 -21.5L23.0 -23.3L20.1 -24.9L17.2 -26.1L14.2 -27.0L11.2 -27.6L8.3 -27.8L5.4 -27.7L2.6 -27.4L-0.1 -26.8L-2.6 -25.9L-4.9 -24.8L-7.1 -23.5L-9.1 -22.0L-10.8 -20.4L-12.4 -18.6L-13.6 -16.7L-14.7 -14.8L-15.5 -12.8L-16.0 -10.8L-16.3 -8.9L-16.4 -7.0L-16.3 -5.1L-16.0 -3.3L-15.5 -1.7L-14.9 -0.2L-14.1 1.2L-13.2 2.5L-12.1 3.5L-11.1 4.4L-9.9 5.1L-8.7 5.7L-7.6 6.0L-6.4 6.2L-5.3 6.2L-4.2 6.1L-3.3 5.8L-2.4 5.5L-1.6 5.0L-1.0 4.4L-0.4 3.7L-0.1 3.0L0.2 2.2L0.3 1.5L0.2 0.7L0.0 0.0ZM-0.0 0.0L-0.7 0.4L-1.4 0.6L-2.1 0.7L-2.9 0.6L-3.7 0.4L-4.5 0.1L-5.2 -0.4L-5.9 -1.0L-6.4 -1.8L-6.9 -2.7L-7.3 -3.7L-7.5 -4.8L-7.6 -6.0L-7.5 -7.2L-7.3 -8.4L-6.9 -9.7L-6.3 -11.0L-5.5 -12.2L-4.5 -13.4L-3.3 -14.5L-2.0 -15.5L-0.5 -16.4L1.1 -17.1L2.9 -17.6L4.8 -18.0L6.8 -18.1L8.9 -18.0L11.0 -17.7L13.1 -17.2L15.2 -16.4L17.3 -15.3L19.3 -14.0L21.2 -12.4L23.0 -10.6L24.6 -8.6L26.0 -6.3L27.3 -3.9L28.2 -1.2L29.0 1.6L29.4 4.5L29.6 7.5L29.4 10.6L28.9 13.7L28.1 16.9L26.9 20.0L25.4 23.0L23.5 25.9L21.3 28.6L18.8 31.2L16.0 33.6L12.9 35.7L9.6 37.5L6.0 39.0L2.2 40.1L-1.7 40.9L-5.8 41.3L-9.9 41.2L-14.1 40.8L-18.4 39.9L-22.5 38.5L-26.6 36.8L-30.5 34.6L-34.3 31.9L-37.8 28.9L-41.1 25.5L-44.1 21.7L-46.6 17.6L-48.9 13.1L-50.6 8.5L-52.0 3.5L-52.8 -1.5L-53.1 -6.8L-53.0 -12.1L-52.2 -17.4L-51.0 -22.7L-49.2 -27.9L-46.8 -33.0L-44.0 -37.9L-40.6 -42.5L-36.7 -46.8L-32.4 -50.8L-27.6 -54.4L-22.5 -57.5L-17.0 -60.1L-11.2 -62.2L-5.2 -63.8L1.1 -64.7L7.5 -65.0L13.9 -64.7L20.4 -63.8L22.2 -63.2L24.1 -62.5L25.9 -61.7L27.7 -61.0L29.5 -60.1L31.3 -59.2L33.0 -58.3L34.7 -57.3L34.7 -57.3L28.6 -59.7L22.4 -61.5L16.2 -62.7L9.9 -63.2L3.6 -63.1L-2.5 -62.4L-8.4 -61.2L-14.2 -59.3L-19.6 -57.0L-24.8 -54.1L-29.5 -50.8L-33.9 -47.1L-37.8 -43.0L-41.3 -38.6L-44.3 -34.0L-46.7 -29.1L-48.7 -24.1L-50.1 -19.0L-51.0 -13.8L-51.4 -8.7L-51.2 -3.6L-50.6 1.4L-49.5 6.2L-47.9 10.8L-45.9 15.2L-43.5 19.3L-40.8 23.1L-37.8 26.5L-34.4 29.5L-30.9 32.2L-27.2 34.5L-23.3 36.3L-19.3 37.8L-15.3 38.8L-11.2 39.4L-7.2 39.5L-3.3 39.3L0.6 38.7L4.2 37.7L7.7 36.4L11.0 34.8L14.0 32.8L16.8 30.7L19.3 28.3L21.5 25.7L23.3 23.0L24.9 20.1L26.1 17.2L27.0 14.2L27.6 11.2L27.8 8.3L27.7 5.4L27.4 2.6L26.8 -0.1L25.9 -2.6L24.8 -4.9L23.5 -7.1L22.0 -9.1L20.4 -10.8L18.6 -12.4L16.7 -13.6L14.8 -14.7L12.8 -15.5L10.8 -16.0L8.9 -16.3L7.0 -16.4L5.1 -16.3L3.3 -16.0L1.7 -15.5L0.2 -14.9L-1.2 -14.1L-2.5 -13.2L-3.5 -12.1L-4.4 -11.1L-5.1 -9.9L-5.7 -8.7L-6.0 -7.6L-6.2 -6.4L-6.2 -5.3L-6.1 -4.2L-5.8 -3.3L-5.5 -2.4L-5.0 -1.6L-4.4 -1.0L-3.7 -0.4L-3.0 -0.1L-2.2 0.2L-1.5 0.3L-0.7 0.2L-0.0 0.0ZM-0.0 -0.0L-0.4 -0.7L-0.6 -1.4L-0.7 -2.1L-0.6 -2.9L-0.4 -3.7L-0.1 -4.5L0.4 -5.2L1.0 -5.9L1.8 -6.4L2.7 -6.9L3.7 -7.3L4.8 -7.5L6.0 -7.6L7.2 -7.5L8.4 -7.3L9.7 -6.9L11.0 -6.3L12.2 -5.5L13.4 -4.5L14.5 -3.3L15.5 -2.0L16.4 -0.5L17.1 1.1L17.6 2.9L18.0 4.8L18.1 6.8L18.0 8.9L17.7 11.0L17.2 13.1L16.4 15.2L15.3 17.3L14.0 19.3L12.4 21.2L10.6 23.0L8.6 24.6L6.3 26.0L3.9 27.3L1.2 28.2L-1.6 29.0L-4.5 29.4L-7.5 29.6L-10.6 29.4L-13.7 28.9L-16.9 28.1L-20.0 26.9L-23.0 25.4L-25.9 23.5L-28.6 21.3L-31.2 18.8L-33.6 16.0L-35.7 12.9L-37.5 9.6L-39.0 6.0L-40.1 2.2L-40.9 -1.7L-41.3 -5.8L-41.2 -9.9L-40.8 -14.1L-39.9 -18.4L-38.5 -22.5L-36.8 -26.6L-34.6 -30.5L-31.9 -34.3L-28.9 -37.8L-25.5 -41.1L-21.7 -44.1L-17.6 -46.6L-13.1 -48.9L-8.5 -50.6L-3.5 -52.0L1.5 -52.8L6.8 -53.1L12.1 -53.0L17.4 -52.2L22.7 -51.0L27.9 -49.2L33.0 -46.8L37.9 -44.0L42.5 -40.6L46.8 -36.7L50.8 -32.4L54.4 -27.6L57.5 -22.5L60.1 -17.0L62.2 -11.2L63.8 -5.2L64.7 1.1L65.0 7.5L64.7 13.9L63.8 20.4L63.2 22.2L62.5 24.1L61.7 25.9L61.0 27.7L60.1 29.5L59.2 31.3L58.3 33.0L57.3 34.7L57.3 34.7L59.7 28.6L61.5 22.4L62.7 16.2L63.2 9.9L63.1 3.6L62.4 -2.5L61.2 -8.4L59.3 -14.2L57.0 -19.6L54.1 -24.8L50.8 -29.5L47.1 -33.9L43.0 -37.8L38.6 -41.3L34.0 -44.3L29.1 -46.7L24.1 -48.7L19.0 -50.1L13.8 -51.0L8.7 -51.4L3.6 -51.2L-1.4 -50.6L-6.2 -49.5L-10.8 -47.9L-15.2 -45.9L-19.3 -43.5L-23.1 -40.8L-26.5 -37.8L-29.5 -34.4L-32.2 -30.9L-34.5 -27.2L-36.3 -23.3L-37.8 -19.3L-38.8 -15.3L-39.4 -11.2L-39.5 -7.2L-39.3 -3.3L-38.7 0.6L-37.7 4.2L-36.4 7.7L-34.8 11.0L-32.8 14.0L-30.7 16.8L-28.3 19.3L-25.7 21.5L-23.0 23.3L-20.1 24.9L-17.2 26.1L-14.2 27.0L-11.2 27.6L-8.3 27.8L-5.4 27.7L-2.6 27.4L0.1 26.8L2.6 25.9L4.9 24.8L7.1 23.5L9.1 22.0L10.8 20.4L12.4 18.6L13.6 16.7L14.7 14.8L15.5 12.8L16.0 10.8L16.3 8.9L16.4 7.0L16.3 5.1L16.0 3.3L15.5 1.7L14.9 0.2L14.1 -1.2L13.2 -2.5L12.1 -3.5L11.1 -4.4L9.9 -5.1L8.7 -5.7L7.6 -6.0L6.4 -6.2L5.3 -6.2L4.2 -6.1L3.3 -5.8L2.4 -5.5L1.6 -5.0L1.0 -4.4L0.4 -3.7L0.1 -3.0L-0.2 -2.2L-0.3 -1.5L-0.2 -0.7L-0.0 -0.0ZM0.0 -0.0L0.7 -0.4L1.4 -0.6L2.1 -0.7L2.9 -0.6L3.7 -0.4L4.5 -0.1L5.2 0.4L5.9 1.0L6.4 1.8L6.9 2.7L7.3 3.7L7.5 4.8L7.6 6.0L7.5 7.2L7.3 8.4L6.9 9.7L6.3 11.0L5.5 12.2L4.5 13.4L3.3 14.5L2.0 15.5L0.5 16.4L-1.1 17.1L-2.9 17.6L-4.8 18.0L-6.8 18.1L-8.9 18.0L-11.0 17.7L-13.1 17.2L-15.2 16.4L-17.3 15.3L-19.3 14.0L-21.2 12.4L-23.0 10.6L-24.6 8.6L-26.0 6.3L-27.3 3.9L-28.2 1.2L-29.0 -1.6L-29.4 -4.5L-29.6 -7.5L-29.4 -10.6L-28.9 -13.7L-28.1 -16.9L-26.9 -20.0L-25.4 -23.0L-23.5 -25.9L-21.3 -28.6L-18.8 -31.2L-16.0 -33.6L-12.9 -35.7L-9.6 -37.5L-6.0 -39.0L-2.2 -40.1L1.7 -40.9L5.8 -41.3L9.9 -41.2L14.1 -40.8L18.4 -39.9L22.5 -38.5L26.6 -36.8L30.5 -34.6L34.3 -31.9L37.8 -28.9L41.1 -25.5L44.1 -21.7L46.6 -17.6L48.9 -13.1L50.6 -8.5L52.0 -3.5L52.8 1.5L53.1 6.8L53.0 12.1L52.2 17.4L51.0 22.7L49.2 27.9L46.8 33.0L44.0 37.9L40.6 42.5L36.7 46.8L32.4 50.8L27.6 54.4L22.5 57.5L17.0 60.1L11.2 62.2L5.2 63.8L-1.1 64.7L-7.5 65.0L-13.9 64.7L-20.4 63.8L-22.2 63.2L-24.1 62.5L-25.9 61.7L-27.7 61.0L-29.5 60.1L-31.3 59.2L-33.0 58.3L-34.7 57.3L-34.7 57.3L-28.6 59.7L-22.4 61.5L-16.2 62.7L-9.9 63.2L-3.6 63.1L2.5 62.4L8.4 61.2L14.2 59.3L19.6 57.0L24.8 54.1L29.5 50.8L33.9 47.1L37.8 43.0L41.3 38.6L44.3 34.0L46.7 29.1L48.7 24.1L50.1 19.0L51.0 13.8L51.4 8.7L51.2 3.6L50.6 -1.4L49.5 -6.2L47.9 -10.8L45.9 -15.2L43.5 -19.3L40.8 -23.1L37.8 -26.5L34.4 -29.5L30.9 -32.2L27.2 -34.5L23.3 -36.3L19.3 -37.8L15.3 -38.8L11.2 -39.4L7.2 -39.5L3.3 -39.3L-0.6 -38.7L-4.2 -37.7L-7.7 -36.4L-11.0 -34.8L-14.0 -32.8L-16.8 -30.7L-19.3 -28.3L-21.5 -25.7L-23.3 -23.0L-24.9 -20.1L-26.1 -17.2L-27.0 -14.2L-27.6 -11.2L-27.8 -8.3L-27.7 -5.4L-27.4 -2.6L-26.8 0.1L-25.9 2.6L-24.8 4.9L-23.5 7.1L-22.0 9.1L-20.4 10.8L-18.6 12.4L-16.7 13.6L-14.8 14.7L-12.8 15.5L-10.8 16.0L-8.9 16.3L-7.0 16.4L-5.1 16.3L-3.3 16.0L-1.7 15.5L-0.2 14.9L1.2 14.1L2.5 13.2L3.5 12.1L4.4 11.1L5.1 9.9L5.7 8.7L6.0 7.6L6.2 6.4L6.2 5.3L6.1 4.2L5.8 3.3L5.5 2.4L5.0 1.6L4.4 1.0L3.7 0.4L3.0 0.1L2.2 -0.2L1.5 -0.3L0.7 -0.2L0.0 -0.0Z" fill-opacity="0.12"/>
<path d="M0.0 0.0L0.3 0.7L0.4 1.4L0.4 2.2L0.3 3.0L-0.0 3.7L-0.5 4.4L-1.1 5.1L-1.8 5.7L-2.6 6.2L-3.6 6.5L-4.6 6.8L-5.7 6.9L-6.9 6.8L-8.1 6.6L-9.3 6.2L-10.5 5.6L-11.7 4.8L-12.8 3.9L-13.9 2.8L-14.8 1.5L-15.6 0.0L-16.3 -1.6L-16.8 -3.3L-17.1 -5.1L-17.2 -7.0L-17.1 -9.0L-16.8 -11.0L-16.2 -13.1L-15.4 -15.1L-14.3 -17.1L-13.0 -19.0L-11.4 -20.9L-9.7 -22.6L-7.6 -24.1L-5.4 -25.5L-3.0 -26.6L-0.4 -27.5L2.3 -28.2L5.2 -28.5L8.2 -28.6L11.2 -28.4L14.2 -27.8L17.3 -26.9L20.3 -25.7L23.2 -24.2L26.0 -22.3L28.6 -20.1L31.1 -17.6L33.3 -14.8L35.3 -11.7L37.0 -8.4L38.4 -4.8L39.4 -1.1L40.1 2.8L40.3 6.8L40.2 10.9L39.7 15.0L38.7 19.1L37.3 23.2L35.4 27.2L33.1 31.0L30.5 34.6L27.4 38.0L23.9 41.2L20.1 44.0L16.0 46.4L11.6 48.5L6.9 50.1L2.0 51.3L-3.0 52.0L-8.2 52.2L-13.4 51.9L-18.6 51.0L-23.8 49.6L-28.9 47.7L-33.9 45.3L-38.6 42.3L-43.1 38.9L-47.3 34.9L-51.1 30.6L-54.5 25.8L-57.4 20.6L-59.9 15.1L-61.8 9.3L-63.2 3.3L-63.9 -2.9L-64.1 -9.2L-63.6 -15.6L-62.5 -21.9L-60.7 -28.2L-60.3 -29.0L-59.9 -29.9L-59.5 -30.7L-59.1 -31.5L-58.7 -32.3L-58.2 -33.1L-57.7 -33.9L-57.3 -34.7L-57.3 -34.7L-59.7 -28.6L-61.5 -22.4L-62.7 -16.2L-63.2 -9.9L-63.1 -3.6L-62.4 2.5L-61.2 8.4L-59.3 14.2L-57.0 19.6L-54.1 24.8L-50.8 29.5L-47.1 33.9L-43.0 37.8L-38.6 41.3L-34.0 44.3L-29.1 46.7L-24.1 48.7L-19.0 50.1L-13.8 51.0L-8.7 51.4L-3.6 51.2L1.4 50.6L6.2 49.5L10.8 47.9L15.2 45.9L19.3 43.5L23.1 40.8L26.5 37.8L29.5 34.4L32.2 30.9L34.5 27.2L36.3 23.3L37.8 19.3L38.8 15.3L39.4 11.2L39.5 7.2L39.3 3.3L38.7 -0.6L37.7 -4.2L36.4 -7.7L34.8 -11.0L32.8 -14.0L30.7 -16.8L28.3 -19.3L25.7 -21.5L23.0 -23.3L20.1 -24.9L17.2 -26.1L14.2 -27.0L11.2 -27.6L8.3 -27.8L5.4 -27.7L2.6 -27.4L-0.1 -26.8L-2.6 -25.9L-4.9 -24.8L-7.1 -23.5L-9.1 -22.0L-10.8 -20.4L-12.4 -18.6L-13.6 -16.7L-14.7 -14.8L-15.5 -12.8L-16.0 -10.8L-16.3 -8.9L-16.4 -7.0L-16.3 -5.1L-16.0 -3.3L-15.5 -1.7L-14.9 -0.2L-14.1 1.2L-13.2 2.5L-12.1 3.5L-11.1 4.4L-9.9 5.1L-8.7 5.7L-7.6 6.0L-6.4 6.2L-5.3 6.2L-4.2 6.1L-3.3 5.8L-2.4 5.5L-1.6 5.0L-1.0 4.4L-0.4 3.7L-0.1 3.0L0.2 2.2L0.3 1.5L0.2 0.7L0.0 0.0ZM-0.0 0.0L-0.7 0.3L-1.4 0.4L-2.2 0.4L-3.0 0.3L-3.7 -0.0L-4.4 -0.5L-5.1 -1.1L-5.7 -1.8L-6.2 -2.6L-6.5 -3.6L-6.8 -4.6L-6.9 -5.7L-6.8 -6.9L-6.6 -8.1L-6.2 -9.3L-5.6 -10.5L-4.8 -11.7L-3.9 -12.8L-2.8 -13.9L-1.5 -14.8L-0.0 -15.6L1.6 -16.3L3.3 -16.8L5.1 -17.1L7.0 -17.2L9.0 -17.1L11.0 -16.8L13.1 -16.2L15.1 -15.4L17.1 -14.3L19.0 -13.0L20.9 -11.4L22.6 -9.7L24.1 -7.6L25.5 -5.4L26.6 -3.0L27.5 -0.4L28.2 2.3L28.5 5.2L28.6 8.2L28.4 11.2L27.8 14.2L26.9 17.3L25.7 20.3L24.2 23.2L22.3 26.0L20.1 28.6L17.6 31.1L14.8 33.3L11.7 35.3L8.4 37.0L4.8 38.4L1.1 39.4L-2.8 40.1L-6.8 40.3L-10.9 40.2L-15.0 39.7L-19.1 38.7L-23.2 37.3L-27.2 35.4L-31.0 33.1L-34.6 30.5L-38.0 27.4L-41.2 23.9L-44.0 20.1L-46.4 16.0L-48.5 11.6L-50.1 6.9L-51.3 2.0L-52.0 -3.0L-52.2 -8.2L-51.9 -13.4L-51.0 -18.6L-49.6 -23.8L-47.7 -28.9L-45.3 -33.9L-42.3 -38.6L-38.9 -43.1L-34.9 -47.3L-30.6 -51.1L-25.8 -54.5L-20.6 -57.4L-15.1 -59.9L-9.3 -61.8L-3.3 -63.2L2.9 -63.9L9.2 -64.1L15.6 -63.6L21.9 -62.5L28.2 -60.7L29.0 -60.3L29.9 -59.9L30.7 -59.5L31.5 -59.1L32.3 -58.7L33.1 -58.2L33.9 -57.7L34.7 -57.3L34.7 -57.3L28.6 -59.7L22.4 -61.5L16.2 -62.7L9.9 -63.2L3.6 -63.1L-2.5 -62.4L-8.4 -61.2L-14.2 -59.3L-19.6 -57.0L-24.8 -54.1L-29.5 -50.8L-33.9 -47.1L-37.8 -43.0L-41.3 -38.6L-44.3 -34.0L-46.7 -29.1L-48.7 -24.1L-50.1 -19.0L-51.0 -13.8L-51.4 -8.7L-51.2 -3.6L-50.6 1.4L-49.5 6.2L-47.9 10.8L-45.9 15.2L-43.5 19.3L-40.8 23.1L-37.8 26.5L-34.4 29.5L-30.9 32.2L-27.2 34.5L-23.3 36.3L-19.3 37.8L-15.3 38.8L-11.2 39.4L-7.2 39.5L-3.3 39.3L0.6 38.7L4.2 37.7L7.7 36.4L11.0 34.8L14.0 32.8L16.8 30.7L19.3 28.3L21.5 25.7L23.3 23.0L24.9 20.1L26.1 17.2L27.0 14.2L27.6 11.2L27.8 8.3L27.7 5.4L27.4 2.6L26.8 -0.1L25.9 -2.6L24.8 -4.9L23.5 -7.1L22.0 -9.1L20.4 -10.8L18.6 -12.4L16.7 -13.6L14.8 -14.7L12.8 -15.5L10.8 -16.0L8.9 -16.3L7.0 -16.4L5.1 -16.3L3.3 -16.0L1.7 -15.5L0.2 -14.9L-1.2 -14.1L-2.5 -13.2L-3.5 -12.1L-4.4 -11.1L-5.1 -9.9L-5.7 -8.7L-6.0 -7.6L-6.2 -6.4L-6.2 -5.3L-6.1 -4.2L-5.8 -3.3L-5.5 -2.4L-5.0 -1.6L-4.4 -1.0L-3.7 -0.4L-3.0 -0.1L-2.2 0.2L-1.5 0.3L-0.7 0.2L-0.0 0.0ZM-0.0 -0.0L-0.3 -0.7L-0.4 -1.4L-0.4 -2.2L-0.3 -3.0L0.0 -3.7L0.5 -4.4L1.1 -5.1L1.8 -5.7L2.6 -6.2L3.6 -6.5L4.6 -6.8L5.7 -6.9L6.9 -6.8L8.1 -6.6L9.3 -6.2L10.5 -5.6L11.7 -4.8L12.8 -3.9L13.9 -2.8L14.8 -1.5L15.6 -0.0L16.3 1.6L16.8 3.3L17.1 5.1L17.2 7.0L17.1 9.0L16.8 11.0L16.2 13.1L15.4 15.1L14.3 17.1L13.0 19.0L11.4 20.9L9.7 22.6L7.6 24.1L5.4 25.5L3.0 26.6L0.4 27.5L-2.3 28.2L-5.2 28.5L-8.2 28.6L-11.2 28.4L-14.2 27.8L-17.3 26.9L-20.3 25.7L-23.2 24.2L-26.0 22.3L-28.6 20.1L-31.1 17.6L-33.3 14.8L-35.3 11.7L-37.0 8.4L-38.4 4.8L-39.4 1.1L-40.1 -2.8L-40.3 -6.8L-40.2 -10.9L-39.7 -15.0L-38.7 -19.1L-37.3 -23.2L-35.4 -27.2L-33.1 -31.0L-30.5 -34.6L-27.4 -38.0L-23.9 -41.2L-20.1 -44.0L-16.0 -46.4L-11.6 -48.5L-6.9 -50.1L-2.0 -51.3L3.0 -52.0L8.2 -52.2L13.4 -51.9L18.6 -51.0L23.8 -49.6L28.9 -47.7L33.9 -45.3L38.6 -42.3L43.1 -38.9L47.3 -34.9L51.1 -30.6L54.5 -25.8L57.4 -20.6L59.9 -15.1L61.8 -9.3L63.2 -3.3L63.9 2.9L64.1 9.2L63.6 15.6L62.5 21.9L60.7 28.2L60.3 29.0L59.9 29.9L59.5 30.7L59.1 31.5L58.7 32.3L58.2 33.1L57.7 33.9L57.3 34.7L57.3 34.7L59.7 28.6L61.5 22.4L62.7 16.2L63.2 9.9L63.1 3.6L62.4 -2.5L61.2 -8.4L59.3 -14.2L57.0 -19.6L54.1 -24.8L50.8 -29.5L47.1 -33.9L43.0 -37.8L38.6 -41.3L34.0 -44.3L29.1 -46.7L24.1 -48.7L19.0 -50.1L13.8 -51.0L8.7 -51.4L3.6 -51.2L-1.4 -50.6L-6.2 -49.5L-10.8 -47.9L-15.2 -45.9L-19.3 -43.5L-23.1 -40.8L-26.5 -37.8L-29.5 -34.4L-32.2 -30.9L-34.5 -27.2L-36.3 -23.3L-37.8 -19.3L-38.8 -15.3L-39.4 -11.2L-39.5 -7.2L-39.3 -3.3L-38.7 0.6L-37.7 4.2L-36.4 7.7L-34.8 11.0L-32.8 14.0L-30.7 16.8L-28.3 19.3L-25.7 21.5L-23.0 23.3L-20.1 24.9L-17.2 26.1L-14.2 27.0L-11.2 27.6L-8.3 27.8L-5.4 27.7L-2.6 27.4L0.1 26.8L2.6 25.9L4.9 24.8L7.1 23.5L9.1 22.0L10.8 20.4L12.4 18.6L13.6 16.7L14.7 14.8L15.5 12.8L16.0 10.8L16.3 8.9L16.4 7.0L16.3 5.1L16.0 3.3L15.5 1.7L14.9 0.2L14.1 -1.2L13.2 -2.5L12.1 -3.5L11.1 -4.4L9.9 -5.1L8.7 -5.7L7.6 -6.0L6.4 -6.2L5.3 -6.2L4.2 -6.1L3.3 -5.8L2.4 -5.5L1.6 -5.0L1.0 -4.4L0.4 -3.7L0.1 -3.0L-0.2 -2.2L-0.3 -1.5L-0.2 -0.7L-0.0 -0.0ZM0.0 -0.0L0.7 -0.3L1.4 -0.4L2.2 -0.4L3.0 -0.3L3.7 0.0L4.4 0.5L5.1 1.1L5.7 1.8L6.2 2.6L6.5 3.6L6.8 4.6L6.9 5.7L6.8 6.9L6.6 8.1L6.2 9.3L5.6 10.5L4.8 11.7L3.9 12.8L2.8 13.9L1.5 14.8L0.0 15.6L-1.6 16.3L-3.3 16.8L-5.1 17.1L-7.0 17.2L-9.0 17.1L-11.0 16.8L-13.1 16.2L-15.1 15.4L-17.1 14.3L-19.0 13.0L-20.9 11.4L-22.6 9.7L-24.1 7.6L-25.5 5.4L-26.6 3.0L-27.5 0.4L-28.2 -2.3L-28.5 -5.2L-28.6 -8.2L-28.4 -11.2L-27.8 -14.2L-26.9 -17.3L-25.7 -20.3L-24.2 -23.2L-22.3 -26.0L-20.1 -28.6L-17.6 -31.1L-14.8 -33.3L-11.7 -35.3L-8.4 -37.0L-4.8 -38.4L-1.1 -39.4L2.8 -40.1L6.8 -40.3L10.9 -40.2L15.0 -39.7L19.1 -38.7L23.2 -37.3L27.2 -35.4L31.0 -33.1L34.6 -30.5L38.0 -27.4L41.2 -23.9L44.0 -20.1L46.4 -16.0L48.5 -11.6L50.1 -6.9L51.3 -2.0L52.0 3.0L52.2 8.2L51.9 13.4L51.0 18.6L49.6 23.8L47.7 28.9L45.3 33.9L42.3 38.6L38.9 43.1L34.9 47.3L30.6 51.1L25.8 54.5L20.6 57.4L15.1 59.9L9.3 61.8L3.3 63.2L-2.9 63.9L-9.2 64.1L-15.6 63.6L-21.9 62.5L-28.2 60.7L-29.0 60.3L-29.9 59.9L-30.7 59.5L-31.5 59.1L-32.3 58.7L-33.1 58.2L-33.9 57.7L-34.7 57.3L-34.7 57.3L-28.6 59.7L-22.4 61.5L-16.2 62.7L-9.9 63.2L-3.6 63.1L2.5 62.4L8.4 61.2L14.2 59.3L19.6 57.0L24.8 54.1L29.5 50.8L33.9 47.1L37.8 43.0L41.3 38.6L44.3 34.0L46.7 29.1L48.7 24.1L50.1 19.0L51.0 13.8L51.4 8.7L51.2 3.6L50.6 -1.4L49.5 -6.2L47.9 -10.8L45.9 -15.2L43.5 -19.3L40.8 -23.1L37.8 -26.5L34.4 -29.5L30.9 -32.2L27.2 -34.5L23.3 -36.3L19.3 -37.8L15.3 -38.8L11.2 -39.4L7.2 -39.5L3.3 -39.3L-0.6 -38.7L-4.2 -37.7L-7.7 -36.4L-11.0 -34.8L-14.0 -32.8L-16.8 -30.7L-19.3 -28.3L-21.5 -25.7L-23.3 -23.0L-24.9 -20.1L-26.1 -17.2L-27.0 -14.2L-27.6 -11.2L-27.8 -8.3L-27.7 -5.4L-27.4 -2.6L-26.8 0.1L-25.9 2.6L-24.8 4.9L-23.5 7.1L-22.0 9.1L-20.4 10.8L-18.6 12.4L-16.7 13.6L-14.8 14.7L-12.8 15.5L-10.8 16.0L-8.9 16.3L-7.0 16.4L-5.1 16.3L-3.3 16.0L-1.7 15.5L-0.2 14.9L1.2 14.1L2.5 13.2L3.5 12.1L4.4 11.1L5.1 9.9L5.7 8.7L6.0 7.6L6.2 6.4L6.2 5.3L6.1 4.2L5.8 3.3L5.5 2.4L5.0 1.6L4.4 1.0L3.7 0.4L3.0 0.1L2.2 -0.2L1.5 -0.3L0.7 -0.2L0.0 -0.0Z" fill-opacity="0.2"/>
<path d="M0.0 0.0L0.2 0.7L0.3 1.5L0.3 2.2L0.1 3.0L-0.3 3.7L-0.8 4.4L-1.4 5.0L-2.1 5.6L-3.0 6.0L-4.0 6.3L-5.0 6.5L-6.1 6.5L-7.3 6.4L-8.5 6.1L-9.7 5.6L-10.8 4.9L-12.0 4.1L-13.0 3.1L-14.0 1.9L-14.9 0.5L-15.6 -0.9L-16.2 -2.6L-16.6 -4.3L-16.8 -6.2L-16.7 -8.1L-16.5 -10.1L-16.1 -12.1L-15.3 -14.1L-14.4 -16.1L-13.2 -18.0L-11.8 -19.8L-10.1 -21.6L-8.2 -23.1L-6.1 -24.5L-3.8 -25.8L-1.3 -26.8L1.3 -27.5L4.1 -28.0L7.0 -28.2L9.9 -28.1L12.9 -27.6L15.9 -26.9L18.9 -25.8L21.8 -24.4L24.6 -22.7L27.3 -20.6L29.8 -18.2L32.1 -15.6L34.2 -12.6L36.0 -9.4L37.5 -6.0L38.6 -2.4L39.4 1.4L39.8 5.3L39.8 9.3L39.4 13.4L38.6 17.5L37.4 21.5L35.7 25.5L33.6 29.3L31.1 33.0L28.2 36.5L24.9 39.7L21.3 42.6L17.3 45.1L13.1 47.3L8.5 49.1L3.8 50.5L-1.2 51.3L-6.3 51.7L-11.4 51.6L-16.6 50.9L-21.8 49.8L-26.9 48.1L-31.8 45.8L-36.6 43.1L-41.2 39.8L-45.4 36.1L-49.4 31.9L-52.9 27.3L-56.0 22.3L-58.6 17.0L-60.7 11.3L-62.3 5.4L-63.2 -0.7L-63.6 -6.9L-63.4 -13.2L-62.5 -19.5L-61.0 -25.8L-58.8 -32.0L-58.7 -32.3L-58.5 -32.6L-58.3 -33.0L-58.1 -33.3L-57.9 -33.7L-57.7 -34.0L-57.5 -34.3L-57.3 -34.7L-57.3 -34.7L-59.7 -28.6L-61.5 -22.4L-62.7 -16.2L-63.2 -9.9L-63.1 -3.6L-62.4 2.5L-61.2 8.4L-59.3 14.2L-57.0 19.6L-54.1 24.8L-50.8 29.5L-47.1 33.9L-43.0 37.8L-38.6 41.3L-34.0 44.3L-29.1 46.7L-24.1 48.7L-19.0 50.1L-13.8 51.0L-8.7 51.4L-3.6 51.2L1.4 50.6L6.2 49.5L10.8 47.9L15.2 45.9L19.3 43.5L23.1 40.8L26.5 37.8L29.5 34.4L32.2 30.9L34.5 27.2L36.3 23.3L37.8 19.3L38.8 15.3L39.4 11.2L39.5 7.2L39.3 3.3L38.7 -0.6L37.7 -4.2L36.4 -7.7L34.8 -11.0L32.8 -14.0L30.7 -16.8L28.3 -19.3L25.7 -21.5L23.0 -23.3L20.1 -24.9L17.2 -26.1L14.2 -27.0L11.2 -27.6L8.3 -27.8L5.4 -27.7L2.6 -27.4L-0.1 -26.8L-2.6 -25.9L-4.9 -24.8L-7.1 -23.5L-9.1 -22.0L-10.8 -20.4L-12.4 -18.6L-13.6 -16.7L-14.7 -14.8L-15.5 -12.8L-16.0 -10.8L-16.3 -8.9L-16.4 -7.0L-16.3 -5.1L-16.0 -3.3L-15.5 -1.7L-14.9 -0.2L-14.1 1.2L-13.2 2.5L-12.1 3.5L-11.1 4.4L-9.9 5.1L-8.7 5.7L-7.6 6.0L-6.4 6.2L-5.3 6.2L-4.2 6.1L-3.3 5.8L-2.4 5.5L-1.6 5.0L-1.0 4.4L-0.4 3.7L-0.1 3.0L0.2 2.2L0.3 1.5L0.2 0.7L0.0 0.0ZM-0.0 0.0L-0.7 0.2L-1.5 0.3L-2.2 0.3L-3.0 0.1L-3.7 -0.3L-4.4 -0.8L-5.0 -1.4L-5.6 -2.1L-6.0 -3.0L-6.3 -4.0L-6.5 -5.0L-6.5 -6.1L-6.4 -7.3L-6.1 -8.5L-5.6 -9.7L-4.9 -10.8L-4.1 -12.0L-3.1 -13.0L-1.9 -14.0L-0.5 -14.9L0.9 -15.6L2.6 -16.2L4.3 -16.6L6.2 -16.8L8.1 -16.7L10.1 -16.5L12.1 -16.1L14.1 -15.3L16.1 -14.4L18.0 -13.2L19.8 -11.8L21.6 -10.1L23.1 -8.2L24.5 -6.1L25.8 -3.8L26.8 -1.3L27.5 1.3L28.0 4.1L28.2 7.0L28.1 9.9L27.6 12.9L26.9 15.9L25.8 18.9L24.4 21.8L22.7 24.6L20.6 27.3L18.2 29.8L15.6 32.1L12.6 34.2L9.4 36.0L6.0 37.5L2.4 38.6L-1.4 39.4L-5.3 39.8L-9.3 39.8L-13.4 39.4L-17.5 38.6L-21.5 37.4L-25.5 35.7L-29.3 33.6L-33.0 31.1L-36.5 28.2L-39.7 24.9L-42.6 21.3L-45.1 17.3L-47.3 13.1L-49.1 8.5L-50.5 3.8L-51.3 -1.2L-51.7 -6.3L-51.6 -11.4L-50.9 -16.6L-49.8 -21.8L-48.1 -26.9L-45.8 -31.8L-43.1 -36.6L-39.8 -41.2L-36.1 -45.4L-31.9 -49.4L-27.3 -52.9L-22.3 -56.0L-17.0 -58.6L-11.3 -60.7L-5.4 -62.3L0.7 -63.2L6.9 -63.6L13.2 -63.4L19.5 -62.5L25.8 -61.0L32.0 -58.8L32.3 -58.7L32.6 -58.5L33.0 -58.3L33.3 -58.1L33.7 -57.9L34.0 -57.7L34.3 -57.5L34.7 -57.3L34.7 -57.3L28.6 -59.7L22.4 -61.5L16.2 -62.7L9.9 -63.2L3.6 -63.1L-2.5 -62.4L-8.4 -61.2L-14.2 -59.3L-19.6 -57.0L-24.8 -54.1L-29.5 -50.8L-33.9 -47.1L-37.8 -43.0L-41.3 -38.6L-44.3 -34.0L-46.7 -29.1L-48.7 -24.1L-50.1 -19.0L-51.0 -13.8L-51.4 -8.7L-51.2 -3.6L-50.6 1.4L-49.5 6.2L-47.9 10.8L-45.9 15.2L-43.5 19.3L-40.8 23.1L-37.8 26.5L-34.4 29.5L-30.9 32.2L-27.2 34.5L-23.3 36.3L-19.3 37.8L-15.3 38.8L-11.2 39.4L-7.2 39.5L-3.3 39.3L0.6 38.7L4.2 37.7L7.7 36.4L11.0 34.8L14.0 32.8L16.8 30.7L19.3 28.3L21.5 25.7L23.3 23.0L24.9 20.1L26.1 17.2L27.0 14.2L27.6 11.2L27.8 8.3L27.7 5.4L27.4 2.6L26.8 -0.1L25.9 -2.6L24.8 -4.9L23.5 -7.1L22.0 -9.1L20.4 -10.8L18.6 -12.4L16.7 -13.6L14.8 -14.7L12.8 -15.5L10.8 -16.0L8.9 -16.3L7.0 -16.4L5.1 -16.3L3.3 -16.0L1.7 -15.5L0.2 -14.9L-1.2 -14.1L-2.5 -13.2L-3.5 -12.1L-4.4 -11.1L-5.1 -9.9L-5.7 -8.7L-6.0 -7.6L-6.2 -6.4L-6.2 -5.3L-6.1 -4.2L-5.8 -3.3L-5.5 -2.4L-5.0 -1.6L-4.4 -1.0L-3.7 -0.4L-3.0 -0.1L-2.2 0.2L-1.5 0.3L-0.7 0.2L-0.0 0.0ZM-0.0 -0.0L-0.2 -0.7L-0.3 -1.5L-0.3 -2.2L-0.1 -3.0L0.3 -3.7L0.8 -4.4L1.4 -5.0L2.1 -5.6L3.0 -6.0L4.0 -6.3L5.0 -6.5L6.1 -6.5L7.3 -6.4L8.5 -6.1L9.7 -5.6L10.8 -4.9L12.0 -4.1L13.0 -3.1L14.0 -1.9L14.9 -0.5L15.6 0.9L16.2 2.6L16.6 4.3L16.8 6.2L16.7 8.1L16.5 10.1L16.1 12.1L15.3 14.1L14.4 16.1L13.2 18.0L11.8 19.8L10.1 21.6L8.2 23.1L6.1 24.5L3.8 25.8L1.3 26.8L-1.3 27.5L-4.1 28.0L-7.0 28.2L-9.9 28.1L-12.9 27.6L-15.9 26.9L-18.9 25.8L-21.8 24.4L-24.6 22.7L-27.3 20.6L-29.8 18.2L-32.1 15.6L-34.2 12.6L-36.0 9.4L-37.5 6.0L-38.6 2.4L-39.4 -1.4L-39.8 -5.3L-39.8 -9.3L-39.4 -13.4L-38.6 -17.5L-37.4 -21.5L-35.7 -25.5L-33.6 -29.3L-31.1 -33.0L-28.2 -36.5L-24.9 -39.7L-21.3 -42.6L-17.3 -45.1L-13.1 -47.3L-8.5 -49.1L-3.8 -50.5L1.2 -51.3L6.3 -51.7L11.4 -51.6L16.6 -50.9L21.8 -49.8L26.9 -48.1L31.8 -45.8L36.6 -43.1L41.2 -39.8L45.4 -36.1L49.4 -31.9L52.9 -27.3L56.0 -22.3L58.6 -17.0L60.7 -11.3L62.3 -5.4L63.2 0.7L63.6 6.9L63.4 13.2L62.5 19.5L61.0 25.8L58.8 32.0L58.7 32.3L58.5 32.6L58.3 33.0L58.1 33.3L57.9 33.7L57.7 34.0L57.5 34.3L57.3 34.7L57.3 34.7L59.7 28.6L61.5 22.4L62.7 16.2L63.2 9.9L63.1 3.6L62.4 -2.5L61.2 -8.4L59.3 -14.2L57.0 -19.6L54.1 -24.8L50.8 -29.5L47.1 -33.9L43.0 -37.8L38.6 -41.3L34.0 -44.3L29.1 -46.7L24.1 -48.7L19.0 -50.1L13.8 -51.0L8.7 -51.4L3.6 -51.2L-1.4 -50.6L-6.2 -49.5L-10.8 -47.9L-15.2 -45.9L-19.3 -43.5L-23.1 -40.8L-26.5 -37.8L-29.5 -34.4L-32.2 -30.9L-34.5 -27.2L-36.3 -23.3L-37.8 -19.3L-38.8 -15.3L-39.4 -11.2L-39.5 -7.2L-39.3 -3.3L-38.7 0.6L-37.7 4.2L-36.4 7.7L-34.8 11.0L-32.8 14.0L-30.7 16.8L-28.3 19.3L-25.7 21.5L-23.0 23.3L-20.1 24.9L-17.2 26.1L-14.2 27.0L-11.2 27.6L-8.3 27.8L-5.4 27.7L-2.6 27.4L0.1 26.8L2.6 25.9L4.9 24.8L7.1 23.5L9.1 22.0L10.8 20.4L12.4 18.6L13.6 16.7L14.7 14.8L15.5 12.8L16.0 10.8L16.3 8.9L16.4 7.0L16.3 5.1L16.0 3.3L15.5 1.7L14.9 0.2L14.1 -1.2L13.2 -2.5L12.1 -3.5L11.1 -4.4L9.9 -5.1L8.7 -5.7L7.6 -6.0L6.4 -6.2L5.3 -6.2L4.2 -6.1L3.3 -5.8L2.4 -5.5L1.6 -5.0L1.0 -4.4L0.4 -3.7L0.1 -3.0L-0.2 -2.2L-0.3 -1.5L-0.2 -0.7L-0.0 -0.0ZM0.0 -0.0L0.7 -0.2L1.5 -0.3L2.2 -0.3L3.0 -0.1L3.7 0.3L4.4 0.8L5.0 1.4L5.6 2.1L6.0 3.0L6.3 4.0L6.5 5.0L6.5 6.1L6.4 7.3L6.1 8.5L5.6 9.7L4.9 10.8L4.1 12.0L3.1 13.0L1.9 14.0L0.5 14.9L-0.9 15.6L-2.6 16.2L-4.3 16.6L-6.2 16.8L-8.1 16.7L-10.1 16.5L-12.1 16.1L-14.1 15.3L-16.1 14.4L-18.0 13.2L-19.8 11.8L-21.6 10.1L-23.1 8.2L-24.5 6.1L-25.8 3.8L-26.8 1.3L-27.5 -1.3L-28.0 -4.1L-28.2 -7.0L-28.1 -9.9L-27.6 -12.9L-26.9 -15.9L-25.8 -18.9L-24.4 -21.8L-22.7 -24.6L-20.6 -27.3L-18.2 -29.8L-15.6 -32.1L-12.6 -34.2L-9.4 -36.0L-6.0 -37.5L-2.4 -38.6L1.4 -39.4L5.3 -39.8L9.3 -39.8L13.4 -39.4L17.5 -38.6L21.5 -37.4L25.5 -35.7L29.3 -33.6L33.0 -31.1L36.5 -28.2L39.7 -24.9L42.6 -21.3L45.1 -17.3L47.3 -13.1L49.1 -8.5L50.5 -3.8L51.3 1.2L51.7 6.3L51.6 11.4L50.9 16.6L49.8 21.8L48.1 26.9L45.8 31.8L43.1 36.6L39.8 41.2L36.1 45.4L31.9 49.4L27.3 52.9L22.3 56.0L17.0 58.6L11.3 60.7L5.4 62.3L-0.7 63.2L-6.9 63.6L-13.2 63.4L-19.5 62.5L-25.8 61.0L-32.0 58.8L-32.3 58.7L-32.6 58.5L-33.0 58.3L-33.3 58.1L-33.7 57.9L-34.0 57.7L-34.3 57.5L-34.7 57.3L-34.7 57.3L-28.6 59.7L-22.4 61.5L-16.2 62.7L-9.9 63.2L-3.6 63.1L2.5 62.4L8.4 61.2L14.2 59.3L19.6 57.0L24.8 54.1L29.5 50.8L33.9 47.1L37.8 43.0L41.3 38.6L44.3 34.0L46.7 29.1L48.7 24.1L50.1 19.0L51.0 13.8L51.4 8.7L51.2 3.6L50.6 -1.4L49.5 -6.2L47.9 -10.8L45.9 -15.2L43.5 -19.3L40.8 -23.1L37.8 -26.5L34.4 -29.5L30.9 -32.2L27.2 -34.5L23.3 -36.3L19.3 -37.8L15.3 -38.8L11.2 -39.4L7.2 -39.5L3.3 -39.3L-0.6 -38.7L-4.2 -37.7L-7.7 -36.4L-11.0 -34.8L-14.0 -32.8L-16.8 -30.7L-19.3 -28.3L-21.5 -25.7L-23.3 -23.0L-24.9 -20.1L-26.1 -17.2L-27.0 -14.2L-27.6 -11.2L-27.8 -8.3L-27.7 -5.4L-27.4 -2.6L-26.8 0.1L-25.9 2.6L-24.8 4.9L-23.5 7.1L-22.0 9.1L-20.4 10.8L-18.6 12.4L-16.7 13.6L-14.8 14.7L-12.8 15.5L-10.8 16.0L-8.9 16.3L-7.0 16.4L-5.1 16.3L-3.3 16.0L-1.7 15.5L-0.2 14.9L1.2 14.1L2.5 13.2L3.5 12.1L4.4 11.1L5.1 9.9L5.7 8.7L6.0 7.6L6.2 6.4L6.2 5.3L6.1 4.2L5.8 3.3L5.5 2.4L5.0 1.6L4.4 1.0L3.7 0.4L3.0 0.1L2.2 -0.2L1.5 -0.3L0.7 -0.2L0.0 -0.0Z" fill-opacity="0.3"/>
</g></g></g>
<g id="inr">
<circle r="53.5" fill="#9dbd29"/>

<g clip-path="url(#cps)"><g transform="translate(-1.3 -2.3)" fill="#3f5f00">
<path d="M-0.0 0.0L-0.4 0.5L-0.7 1.1L-0.9 1.7L-1.1 2.3L-1.3 3.0L-1.3 3.6L-1.3 4.3L-1.2 5.0L-1.0 5.7L-0.8 6.4L-0.5 7.0L-0.1 7.7L0.4 8.3L0.9 8.9L1.5 9.5L2.2 10.0L2.9 10.5L3.7 10.9L4.6 11.3L5.5 11.6L6.4 11.9L7.4 12.0L8.4 12.1L9.5 12.1L10.6 12.1L11.7 11.9L12.8 11.7L13.9 11.3L15.1 10.9L16.2 10.4L17.3 9.8L18.4 9.1L19.5 8.3L20.5 7.4L21.5 6.4L22.5 5.4L23.4 4.2L24.2 3.0L25.0 1.7L25.7 0.3L26.3 -1.2L26.8 -2.7L27.3 -4.3L27.6 -6.0L27.8 -7.7L28.0 -9.4L28.0 -11.2L27.9 -13.1L27.7 -14.9L27.4 -16.8L26.9 -18.6L26.3 -20.5L25.6 -22.4L24.8 -24.2L23.8 -26.1L22.7 -27.8L21.5 -29.6L20.2 -31.3L18.7 -32.9L17.1 -34.5L15.4 -36.0L13.6 -37.4L11.7 -38.7L9.6 -39.9L7.5 -41.1L5.3 -42.0L2.9 -42.9L0.5 -43.7L-1.9 -44.3L-4.5 -44.7L-7.1 -45.0L-9.7 -45.2L-12.4 -45.2L-15.1 -45.0L-17.8 -44.7L-20.6 -44.2L-23.3 -43.6L-26.1 -42.8L-28.8 -41.8L-31.5 -40.6L-34.1 -39.2L-36.7 -37.7L-39.2 -36.0L-41.7 -34.2L-44.1 -32.2L-46.3 -30.0L-48.5 -27.7L-50.6 -25.2L-52.5 -22.6L-54.3 -19.9L-56.2 -13.3L-57.4 -6.6L-57.8 0.2L-57.4 6.9L-56.1 13.6L-54.2 20.1L-51.4 26.4L-48.0 32.2L-48.0 32.2L-49.1 29.2L-50.1 26.1L-50.9 23.0L-51.5 19.8L-51.9 16.7L-52.2 13.6L-52.2 10.6L-52.1 7.5L-51.8 4.5L-51.3 1.6L-50.7 -1.2L-49.9 -4.0L-49.0 -6.7L-47.9 -9.3L-46.7 -11.9L-45.3 -14.3L-43.8 -16.5L-42.3 -18.7L-40.6 -20.8L-38.8 -22.7L-36.9 -24.5L-35.0 -26.1L-33.0 -27.6L-30.9 -29.0L-28.8 -30.2L-26.7 -31.3L-24.5 -32.2L-22.3 -33.0L-20.1 -33.6L-17.8 -34.1L-15.6 -34.5L-13.5 -34.7L-11.3 -34.8L-9.2 -34.8L-7.1 -34.6L-5.0 -34.3L-3.0 -33.9L-1.1 -33.4L0.7 -32.7L2.5 -32.0L4.2 -31.2L5.8 -30.3L7.4 -29.3L8.8 -28.2L10.1 -27.1L11.4 -25.9L12.5 -24.6L13.6 -23.3L14.5 -22.0L15.3 -20.6L16.0 -19.2L16.6 -17.8L17.2 -16.4L17.6 -15.0L17.9 -13.6L18.1 -12.3L18.2 -10.9L18.2 -9.6L18.1 -8.3L17.9 -7.0L17.7 -5.8L17.4 -4.6L17.0 -3.5L16.5 -2.5L16.0 -1.5L15.4 -0.5L14.8 0.3L14.1 1.1L13.4 1.8L12.6 2.4L11.8 3.0L11.0 3.4L10.2 3.8L9.4 4.1L8.6 4.3L7.8 4.5L7.0 4.6L6.2 4.6L5.4 4.5L4.7 4.4L4.0 4.2L3.3 3.9L2.7 3.6L2.2 3.2L1.7 2.8L1.2 2.3L0.8 1.8L0.5 1.2L0.2 0.6L0.0 0.0ZM0.0 -0.0L0.4 -0.5L0.7 -1.1L0.9 -1.7L1.1 -2.3L1.3 -3.0L1.3 -3.6L1.3 -4.3L1.2 -5.0L1.0 -5.7L0.8 -6.4L0.5 -7.0L0.1 -7.7L-0.4 -8.3L-0.9 -8.9L-1.5 -9.5L-2.2 -10.0L-2.9 -10.5L-3.7 -10.9L-4.6 -11.3L-5.5 -11.6L-6.4 -11.9L-7.4 -12.0L-8.4 -12.1L-9.5 -12.1L-10.6 -12.1L-11.7 -11.9L-12.8 -11.7L-13.9 -11.3L-15.1 -10.9L-16.2 -10.4L-17.3 -9.8L-18.4 -9.1L-19.5 -8.3L-20.5 -7.4L-21.5 -6.4L-22.5 -5.4L-23.4 -4.2L-24.2 -3.0L-25.0 -1.7L-25.7 -0.3L-26.3 1.2L-26.8 2.7L-27.3 4.3L-27.6 6.0L-27.8 7.7L-28.0 9.4L-28.0 11.2L-27.9 13.1L-27.7 14.9L-27.4 16.8L-26.9 18.6L-26.3 20.5L-25.6 22.4L-24.8 24.2L-23.8 26.1L-22.7 27.8L-21.5 29.6L-20.2 31.3L-18.7 32.9L-17.1 34.5L-15.4 36.0L-13.6 37.4L-11.7 38.7L-9.6 39.9L-7.5 41.1L-5.3 42.0L-2.9 42.9L-0.5 43.7L1.9 44.3L4.5 44.7L7.1 45.0L9.7 45.2L12.4 45.2L15.1 45.0L17.8 44.7L20.6 44.2L23.3 43.6L26.1 42.8L28.8 41.8L31.5 40.6L34.1 39.2L36.7 37.7L39.2 36.0L41.7 34.2L44.1 32.2L46.3 30.0L48.5 27.7L50.6 25.2L52.5 22.6L54.3 19.9L56.2 13.3L57.4 6.6L57.8 -0.2L57.4 -6.9L56.1 -13.6L54.2 -20.1L51.4 -26.4L48.0 -32.2L48.0 -32.2L49.1 -29.2L50.1 -26.1L50.9 -23.0L51.5 -19.8L51.9 -16.7L52.2 -13.6L52.2 -10.6L52.1 -7.5L51.8 -4.5L51.3 -1.6L50.7 1.2L49.9 4.0L49.0 6.7L47.9 9.3L46.7 11.9L45.3 14.3L43.8 16.5L42.3 18.7L40.6 20.8L38.8 22.7L36.9 24.5L35.0 26.1L33.0 27.6L30.9 29.0L28.8 30.2L26.7 31.3L24.5 32.2L22.3 33.0L20.1 33.6L17.8 34.1L15.6 34.5L13.5 34.7L11.3 34.8L9.2 34.8L7.1 34.6L5.0 34.3L3.0 33.9L1.1 33.4L-0.7 32.7L-2.5 32.0L-4.2 31.2L-5.8 30.3L-7.4 29.3L-8.8 28.2L-10.1 27.1L-11.4 25.9L-12.5 24.6L-13.6 23.3L-14.5 22.0L-15.3 20.6L-16.0 19.2L-16.6 17.8L-17.2 16.4L-17.6 15.0L-17.9 13.6L-18.1 12.3L-18.2 10.9L-18.2 9.6L-18.1 8.3L-17.9 7.0L-17.7 5.8L-17.4 4.6L-17.0 3.5L-16.5 2.5L-16.0 1.5L-15.4 0.5L-14.8 -0.3L-14.1 -1.1L-13.4 -1.8L-12.6 -2.4L-11.8 -3.0L-11.0 -3.4L-10.2 -3.8L-9.4 -4.1L-8.6 -4.3L-7.8 -4.5L-7.0 -4.6L-6.2 -4.6L-5.4 -4.5L-4.7 -4.4L-4.0 -4.2L-3.3 -3.9L-2.7 -3.6L-2.2 -3.2L-1.7 -2.8L-1.2 -2.3L-0.8 -1.8L-0.5 -1.2L-0.2 -0.6L-0.0 -0.0Z" fill-opacity="0.04"/>
<path d="M0.0 0.0L0.5 0.4L1.1 0.7L1.7 0.9L2.3 1.1L3.0 1.3L3.6 1.3L4.3 1.3L5.0 1.2L5.7 1.0L6.4 0.8L7.0 0.5L7.7 0.1L8.3 -0.4L8.9 -0.9L9.5 -1.5L10.0 -2.2L10.5 -2.9L10.9 -3.7L11.3 -4.6L11.6 -5.5L11.9 -6.4L12.0 -7.4L12.1 -8.4L12.1 -9.5L12.1 -10.6L11.9 -11.7L11.7 -12.8L11.3 -13.9L10.9 -15.1L10.4 -16.2L9.8 -17.3L9.1 -18.4L8.3 -19.5L7.4 -20.5L6.4 -21.5L5.4 -22.5L4.2 -23.4L3.0 -24.2L1.7 -25.0L0.3 -25.7L-1.2 -26.3L-2.7 -26.8L-4.3 -27.3L-6.0 -27.6L-7.7 -27.8L-9.4 -28.0L-11.2 -28.0L-13.1 -27.9L-14.9 -27.7L-16.8 -27.4L-18.6 -26.9L-20.5 -26.3L-22.4 -25.6L-24.2 -24.8L-26.1 -23.8L-27.8 -22.7L-29.6 -21.5L-31.3 -20.2L-32.9 -18.7L-34.5 -17.1L-36.0 -15.4L-37.4 -13.6L-38.7 -11.7L-39.9 -9.6L-41.1 -7.5L-42.0 -5.3L-42.9 -2.9L-43.7 -0.5L-44.3 1.9L-44.7 4.5L-45.0 7.1L-45.2 9.7L-45.2 12.4L-45.0 15.1L-44.7 17.8L-44.2 20.6L-43.6 23.3L-42.8 26.1L-41.8 28.8L-40.6 31.5L-39.2 34.1L-37.7 36.7L-36.0 39.2L-34.2 41.7L-32.2 44.1L-30.0 46.3L-27.7 48.5L-25.2 50.6L-22.6 52.5L-19.9 54.3L-13.3 56.2L-6.6 57.4L0.2 57.8L6.9 57.4L13.6 56.1L20.1 54.2L26.4 51.4L32.2 48.0L32.2 48.0L29.2 49.1L26.1 50.1L23.0 50.9L19.8 51.5L16.7 51.9L13.6 52.2L10.6 52.2L7.5 52.1L4.5 51.8L1.6 51.3L-1.2 50.7L-4.0 49.9L-6.7 49.0L-9.3 47.9L-11.9 46.7L-14.3 45.3L-16.5 43.8L-18.7 42.3L-20.8 40.6L-22.7 38.8L-24.5 36.9L-26.1 35.0L-27.6 33.0L-29.0 30.9L-30.2 28.8L-31.3 26.7L-32.2 24.5L-33.0 22.3L-33.6 20.1L-34.1 17.8L-34.5 15.6L-34.7 13.5L-34.8 11.3L-34.8 9.2L-34.6 7.1L-34.3 5.0L-33.9 3.0L-33.4 1.1L-32.7 -0.7L-32.0 -2.5L-31.2 -4.2L-30.3 -5.8L-29.3 -7.4L-28.2 -8.8L-27.1 -10.1L-25.9 -11.4L-24.6 -12.5L-23.3 -13.6L-22.0 -14.5L-20.6 -15.3L-19.2 -16.0L-17.8 -16.6L-16.4 -17.2L-15.0 -17.6L-13.6 -17.9L-12.3 -18.1L-10.9 -18.2L-9.6 -18.2L-8.3 -18.1L-7.0 -17.9L-5.8 -17.7L-4.6 -17.4L-3.5 -17.0L-2.5 -16.5L-1.5 -16.0L-0.5 -15.4L0.3 -14.8L1.1 -14.1L1.8 -13.4L2.4 -12.6L3.0 -11.8L3.4 -11.0L3.8 -10.2L4.1 -9.4L4.3 -8.6L4.5 -7.8L4.6 -7.0L4.6 -6.2L4.5 -5.4L4.4 -4.7L4.2 -4.0L3.9 -3.3L3.6 -2.7L3.2 -2.2L2.8 -1.7L2.3 -1.2L1.8 -0.8L1.2 -0.5L0.6 -0.2L0.0 -0.0ZM-0.0 -0.0L-0.5 -0.4L-1.1 -0.7L-1.7 -0.9L-2.3 -1.1L-3.0 -1.3L-3.6 -1.3L-4.3 -1.3L-5.0 -1.2L-5.7 -1.0L-6.4 -0.8L-7.0 -0.5L-7.7 -0.1L-8.3 0.4L-8.9 0.9L-9.5 1.5L-10.0 2.2L-10.5 2.9L-10.9 3.7L-11.3 4.6L-11.6 5.5L-11.9 6.4L-12.0 7.4L-12.1 8.4L-12.1 9.5L-12.1 10.6L-11.9 11.7L-11.7 12.8L-11.3 13.9L-10.9 15.1L-10.4 16.2L-9.8 17.3L-9.1 18.4L-8.3 19.5L-7.4 20.5L-6.4 21.5L-5.4 22.5L-4.2 23.4L-3.0 24.2L-1.7 25.0L-0.3 25.7L1.2 26.3L2.7 26.8L4.3 27.3L6.0 27.6L7.7 27.8L9.4 28.0L11.2 28.0L13.1 27.9L14.9 27.7L16.8 27.4L18.6 26.9L20.5 26.3L22.4 25.6L24.2 24.8L26.1 23.8L27.8 22.7L29.6 21.5L31.3 20.2L32.9 18.7L34.5 17.1L36.0 15.4L37.4 13.6L38.7 11.7L39.9 9.6L41.1 7.5L42.0 5.3L42.9 2.9L43.7 0.5L44.3 -1.9L44.7 -4.5L45.0 -7.1L45.2 -9.7L45.2 -12.4L45.0 -15.1L44.7 -17.8L44.2 -20.6L43.6 -23.3L42.8 -26.1L41.8 -28.8L40.6 -31.5L39.2 -34.1L37.7 -36.7L36.0 -39.2L34.2 -41.7L32.2 -44.1L30.0 -46.3L27.7 -48.5L25.2 -50.6L22.6 -52.5L19.9 -54.3L13.3 -56.2L6.6 -57.4L-0.2 -57.8L-6.9 -57.4L-13.6 -56.1L-20.1 -54.2L-26.4 -51.4L-32.2 -48.0L-32.2 -48.0L-29.2 -49.1L-26.1 -50.1L-23.0 -50.9L-19.8 -51.5L-16.7 -51.9L-13.6 -52.2L-10.6 -52.2L-7.5 -52.1L-4.5 -51.8L-1.6 -51.3L1.2 -50.7L4.0 -49.9L6.7 -49.0L9.3 -47.9L11.9 -46.7L14.3 -45.3L16.5 -43.8L18.7 -42.3L20.8 -40.6L22.7 -38.8L24.5 -36.9L26.1 -35.0L27.6 -33.0L29.0 -30.9L30.2 -28.8L31.3 -26.7L32.2 -24.5L33.0 -22.3L33.6 -20.1L34.1 -17.8L34.5 -15.6L34.7 -13.5L34.8 -11.3L34.8 -9.2L34.6 -7.1L34.3 -5.0L33.9 -3.0L33.4 -1.1L32.7 0.7L32.0 2.5L31.2 4.2L30.3 5.8L29.3 7.4L28.2 8.8L27.1 10.1L25.9 11.4L24.6 12.5L23.3 13.6L22.0 14.5L20.6 15.3L19.2 16.0L17.8 16.6L16.4 17.2L15.0 17.6L13.6 17.9L12.3 18.1L10.9 18.2L9.6 18.2L8.3 18.1L7.0 17.9L5.8 17.7L4.6 17.4L3.5 17.0L2.5 16.5L1.5 16.0L0.5 15.4L-0.3 14.8L-1.1 14.1L-1.8 13.4L-2.4 12.6L-3.0 11.8L-3.4 11.0L-3.8 10.2L-4.1 9.4L-4.3 8.6L-4.5 7.8L-4.6 7.0L-4.6 6.2L-4.5 5.4L-4.4 4.7L-4.2 4.0L-3.9 3.3L-3.6 2.7L-3.2 2.2L-2.8 1.7L-2.3 1.2L-1.8 0.8L-1.2 0.5L-0.6 0.2L-0.0 0.0Z" fill-opacity="0.014"/>
<path d="M-0.0 0.0L-0.1 0.6L-0.2 1.3L-0.2 1.9L-0.2 2.6L-0.0 3.2L0.2 3.8L0.5 4.5L0.8 5.1L1.2 5.6L1.7 6.2L2.3 6.7L2.9 7.1L3.6 7.5L4.3 7.9L5.1 8.2L5.9 8.4L6.7 8.6L7.6 8.7L8.5 8.7L9.5 8.6L10.5 8.5L11.4 8.3L12.4 8.0L13.4 7.6L14.4 7.1L15.4 6.5L16.3 5.9L17.2 5.1L18.1 4.3L19.0 3.4L19.8 2.4L20.5 1.4L21.2 0.2L21.8 -1.0L22.4 -2.3L22.8 -3.6L23.2 -5.0L23.5 -6.5L23.7 -8.0L23.8 -9.6L23.8 -11.2L23.7 -12.8L23.5 -14.4L23.2 -16.1L22.8 -17.8L22.2 -19.4L21.6 -21.1L20.8 -22.7L19.9 -24.4L18.9 -26.0L17.7 -27.5L16.5 -29.0L15.1 -30.5L13.6 -31.9L12.0 -33.2L10.4 -34.4L8.6 -35.6L6.7 -36.6L4.7 -37.6L2.6 -38.4L0.5 -39.2L-1.8 -39.8L-4.0 -40.2L-6.4 -40.6L-8.8 -40.8L-11.2 -40.9L-13.7 -40.8L-16.2 -40.5L-18.7 -40.2L-21.2 -39.6L-23.8 -38.9L-26.3 -38.0L-28.7 -37.0L-31.2 -35.8L-33.6 -34.5L-36.0 -33.0L-38.2 -31.3L-40.5 -29.5L-42.6 -27.6L-44.6 -25.4L-46.5 -23.2L-48.4 -20.8L-50.1 -18.3L-51.6 -15.6L-53.0 -12.9L-54.3 -10.0L-55.4 -7.0L-56.4 -4.0L-57.1 -0.8L-57.7 2.4L-57.4 6.4L-56.9 10.3L-56.0 14.2L-54.9 18.0L-53.5 21.7L-51.9 25.4L-50.1 28.9L-48.0 32.2L-48.0 32.2L-49.1 29.2L-50.1 26.1L-50.9 23.0L-51.5 19.8L-51.9 16.7L-52.2 13.6L-52.2 10.6L-52.1 7.5L-51.8 4.5L-51.3 1.6L-50.7 -1.2L-49.9 -4.0L-49.0 -6.7L-47.9 -9.3L-46.7 -11.9L-45.3 -14.3L-43.8 -16.5L-42.3 -18.7L-40.6 -20.8L-38.8 -22.7L-36.9 -24.5L-35.0 -26.1L-33.0 -27.6L-30.9 -29.0L-28.8 -30.2L-26.7 -31.3L-24.5 -32.2L-22.3 -33.0L-20.1 -33.6L-17.8 -34.1L-15.6 -34.5L-13.5 -34.7L-11.3 -34.8L-9.2 -34.8L-7.1 -34.6L-5.0 -34.3L-3.0 -33.9L-1.1 -33.4L0.7 -32.7L2.5 -32.0L4.2 -31.2L5.8 -30.3L7.4 -29.3L8.8 -28.2L10.1 -27.1L11.4 -25.9L12.5 -24.6L13.6 -23.3L14.5 -22.0L15.3 -20.6L16.0 -19.2L16.6 -17.8L17.2 -16.4L17.6 -15.0L17.9 -13.6L18.1 -12.3L18.2 -10.9L18.2 -9.6L18.1 -8.3L17.9 -7.0L17.7 -5.8L17.4 -4.6L17.0 -3.5L16.5 -2.5L16.0 -1.5L15.4 -0.5L14.8 0.3L14.1 1.1L13.4 1.8L12.6 2.4L11.8 3.0L11.0 3.4L10.2 3.8L9.4 4.1L8.6 4.3L7.8 4.5L7.0 4.6L6.2 4.6L5.4 4.5L4.7 4.4L4.0 4.2L3.3 3.9L2.7 3.6L2.2 3.2L1.7 2.8L1.2 2.3L0.8 1.8L0.5 1.2L0.2 0.6L0.0 0.0ZM0.0 -0.0L0.1 -0.6L0.2 -1.3L0.2 -1.9L0.2 -2.6L0.0 -3.2L-0.2 -3.8L-0.5 -4.5L-0.8 -5.1L-1.2 -5.6L-1.7 -6.2L-2.3 -6.7L-2.9 -7.1L-3.6 -7.5L-4.3 -7.9L-5.1 -8.2L-5.9 -8.4L-6.7 -8.6L-7.6 -8.7L-8.5 -8.7L-9.5 -8.6L-10.5 -8.5L-11.4 -8.3L-12.4 -8.0L-13.4 -7.6L-14.4 -7.1L-15.4 -6.5L-16.3 -5.9L-17.2 -5.1L-18.1 -4.3L-19.0 -3.4L-19.8 -2.4L-20.5 -1.4L-21.2 -0.2L-21.8 1.0L-22.4 2.3L-22.8 3.6L-23.2 5.0L-23.5 6.5L-23.7 8.0L-23.8 9.6L-23.8 11.2L-23.7 12.8L-23.5 14.4L-23.2 16.1L-22.8 17.8L-22.2 19.4L-21.6 21.1L-20.8 22.7L-19.9 24.4L-18.9 26.0L-17.7 27.5L-16.5 29.0L-15.1 30.5L-13.6 31.9L-12.0 33.2L-10.4 34.4L-8.6 35.6L-6.7 36.6L-4.7 37.6L-2.6 38.4L-0.5 39.2L1.8 39.8L4.0 40.2L6.4 40.6L8.8 40.8L11.2 40.9L13.7 40.8L16.2 40.5L18.7 40.2L21.2 39.6L23.8 38.9L26.3 38.0L28.7 37.0L31.2 35.8L33.6 34.5L36.0 33.0L38.2 31.3L40.5 29.5L42.6 27.6L44.6 25.4L46.5 23.2L48.4 20.8L50.1 18.3L51.6 15.6L53.0 12.9L54.3 10.0L55.4 7.0L56.4 4.0L57.1 0.8L57.7 -2.4L57.4 -6.4L56.9 -10.3L56.0 -14.2L54.9 -18.0L53.5 -21.7L51.9 -25.4L50.1 -28.9L48.0 -32.2L48.0 -32.2L49.1 -29.2L50.1 -26.1L50.9 -23.0L51.5 -19.8L51.9 -16.7L52.2 -13.6L52.2 -10.6L52.1 -7.5L51.8 -4.5L51.3 -1.6L50.7 1.2L49.9 4.0L49.0 6.7L47.9 9.3L46.7 11.9L45.3 14.3L43.8 16.5L42.3 18.7L40.6 20.8L38.8 22.7L36.9 24.5L35.0 26.1L33.0 27.6L30.9 29.0L28.8 30.2L26.7 31.3L24.5 32.2L22.3 33.0L20.1 33.6L17.8 34.1L15.6 34.5L13.5 34.7L11.3 34.8L9.2 34.8L7.1 34.6L5.0 34.3L3.0 33.9L1.1 33.4L-0.7 32.7L-2.5 32.0L-4.2 31.2L-5.8 30.3L-7.4 29.3L-8.8 28.2L-10.1 27.1L-11.4 25.9L-12.5 24.6L-13.6 23.3L-14.5 22.0L-15.3 20.6L-16.0 19.2L-16.6 17.8L-17.2 16.4L-17.6 15.0L-17.9 13.6L-18.1 12.3L-18.2 10.9L-18.2 9.6L-18.1 8.3L-17.9 7.0L-17.7 5.8L-17.4 4.6L-17.0 3.5L-16.5 2.5L-16.0 1.5L-15.4 0.5L-14.8 -0.3L-14.1 -1.1L-13.4 -1.8L-12.6 -2.4L-11.8 -3.0L-11.0 -3.4L-10.2 -3.8L-9.4 -4.1L-8.6 -4.3L-7.8 -4.5L-7.0 -4.6L-6.2 -4.6L-5.4 -4.5L-4.7 -4.4L-4.0 -4.2L-3.3 -3.9L-2.7 -3.6L-2.2 -3.2L-1.7 -2.8L-1.2 -2.3L-0.8 -1.8L-0.5 -1.2L-0.2 -0.6L-0.0 -0.0Z" fill-opacity="0.05"/>
<path d="M0.0 0.0L0.6 0.1L1.3 0.2L1.9 0.2L2.6 0.2L3.2 0.0L3.8 -0.2L4.5 -0.5L5.1 -0.8L5.6 -1.2L6.2 -1.7L6.7 -2.3L7.1 -2.9L7.5 -3.6L7.9 -4.3L8.2 -5.1L8.4 -5.9L8.6 -6.7L8.7 -7.6L8.7 -8.5L8.6 -9.5L8.5 -10.5L8.3 -11.4L8.0 -12.4L7.6 -13.4L7.1 -14.4L6.5 -15.4L5.9 -16.3L5.1 -17.2L4.3 -18.1L3.4 -19.0L2.4 -19.8L1.4 -20.5L0.2 -21.2L-1.0 -21.8L-2.3 -22.4L-3.6 -22.8L-5.0 -23.2L-6.5 -23.5L-8.0 -23.7L-9.6 -23.8L-11.2 -23.8L-12.8 -23.7L-14.4 -23.5L-16.1 -23.2L-17.8 -22.8L-19.4 -22.2L-21.1 -21.6L-22.7 -20.8L-24.4 -19.9L-26.0 -18.9L-27.5 -17.7L-29.0 -16.5L-30.5 -15.1L-31.9 -13.6L-33.2 -12.0L-34.4 -10.4L-35.6 -8.6L-36.6 -6.7L-37.6 -4.7L-38.4 -2.6L-39.2 -0.5L-39.8 1.8L-40.2 4.0L-40.6 6.4L-40.8 8.8L-40.9 11.2L-40.8 13.7L-40.5 16.2L-40.2 18.7L-39.6 21.2L-38.9 23.8L-38.0 26.3L-37.0 28.7L-35.8 31.2L-34.5 33.6L-33.0 36.0L-31.3 38.2L-29.5 40.5L-27.6 42.6L-25.4 44.6L-23.2 46.5L-20.8 48.4L-18.3 50.1L-15.6 51.6L-12.9 53.0L-10.0 54.3L-7.0 55.4L-4.0 56.4L-0.8 57.1L2.4 57.7L6.4 57.4L10.3 56.9L14.2 56.0L18.0 54.9L21.7 53.5L25.4 51.9L28.9 50.1L32.2 48.0L32.2 48.0L29.2 49.1L26.1 50.1L23.0 50.9L19.8 51.5L16.7 51.9L13.6 52.2L10.6 52.2L7.5 52.1L4.5 51.8L1.6 51.3L-1.2 50.7L-4.0 49.9L-6.7 49.0L-9.3 47.9L-11.9 46.7L-14.3 45.3L-16.5 43.8L-18.7 42.3L-20.8 40.6L-22.7 38.8L-24.5 36.9L-26.1 35.0L-27.6 33.0L-29.0 30.9L-30.2 28.8L-31.3 26.7L-32.2 24.5L-33.0 22.3L-33.6 20.1L-34.1 17.8L-34.5 15.6L-34.7 13.5L-34.8 11.3L-34.8 9.2L-34.6 7.1L-34.3 5.0L-33.9 3.0L-33.4 1.1L-32.7 -0.7L-32.0 -2.5L-31.2 -4.2L-30.3 -5.8L-29.3 -7.4L-28.2 -8.8L-27.1 -10.1L-25.9 -11.4L-24.6 -12.5L-23.3 -13.6L-22.0 -14.5L-20.6 -15.3L-19.2 -16.0L-17.8 -16.6L-16.4 -17.2L-15.0 -17.6L-13.6 -17.9L-12.3 -18.1L-10.9 -18.2L-9.6 -18.2L-8.3 -18.1L-7.0 -17.9L-5.8 -17.7L-4.6 -17.4L-3.5 -17.0L-2.5 -16.5L-1.5 -16.0L-0.5 -15.4L0.3 -14.8L1.1 -14.1L1.8 -13.4L2.4 -12.6L3.0 -11.8L3.4 -11.0L3.8 -10.2L4.1 -9.4L4.3 -8.6L4.5 -7.8L4.6 -7.0L4.6 -6.2L4.5 -5.4L4.4 -4.7L4.2 -4.0L3.9 -3.3L3.6 -2.7L3.2 -2.2L2.8 -1.7L2.3 -1.2L1.8 -0.8L1.2 -0.5L0.6 -0.2L0.0 -0.0ZM-0.0 -0.0L-0.6 -0.1L-1.3 -0.2L-1.9 -0.2L-2.6 -0.2L-3.2 -0.0L-3.8 0.2L-4.5 0.5L-5.1 0.8L-5.6 1.2L-6.2 1.7L-6.7 2.3L-7.1 2.9L-7.5 3.6L-7.9 4.3L-8.2 5.1L-8.4 5.9L-8.6 6.7L-8.7 7.6L-8.7 8.5L-8.6 9.5L-8.5 10.5L-8.3 11.4L-8.0 12.4L-7.6 13.4L-7.1 14.4L-6.5 15.4L-5.9 16.3L-5.1 17.2L-4.3 18.1L-3.4 19.0L-2.4 19.8L-1.4 20.5L-0.2 21.2L1.0 21.8L2.3 22.4L3.6 22.8L5.0 23.2L6.5 23.5L8.0 23.7L9.6 23.8L11.2 23.8L12.8 23.7L14.4 23.5L16.1 23.2L17.8 22.8L19.4 22.2L21.1 21.6L22.7 20.8L24.4 19.9L26.0 18.9L27.5 17.7L29.0 16.5L30.5 15.1L31.9 13.6L33.2 12.0L34.4 10.4L35.6 8.6L36.6 6.7L37.6 4.7L38.4 2.6L39.2 0.5L39.8 -1.8L40.2 -4.0L40.6 -6.4L40.8 -8.8L40.9 -11.2L40.8 -13.7L40.5 -16.2L40.2 -18.7L39.6 -21.2L38.9 -23.8L38.0 -26.3L37.0 -28.7L35.8 -31.2L34.5 -33.6L33.0 -36.0L31.3 -38.2L29.5 -40.5L27.6 -42.6L25.4 -44.6L23.2 -46.5L20.8 -48.4L18.3 -50.1L15.6 -51.6L12.9 -53.0L10.0 -54.3L7.0 -55.4L4.0 -56.4L0.8 -57.1L-2.4 -57.7L-6.4 -57.4L-10.3 -56.9L-14.2 -56.0L-18.0 -54.9L-21.7 -53.5L-25.4 -51.9L-28.9 -50.1L-32.2 -48.0L-32.2 -48.0L-29.2 -49.1L-26.1 -50.1L-23.0 -50.9L-19.8 -51.5L-16.7 -51.9L-13.6 -52.2L-10.6 -52.2L-7.5 -52.1L-4.5 -51.8L-1.6 -51.3L1.2 -50.7L4.0 -49.9L6.7 -49.0L9.3 -47.9L11.9 -46.7L14.3 -45.3L16.5 -43.8L18.7 -42.3L20.8 -40.6L22.7 -38.8L24.5 -36.9L26.1 -35.0L27.6 -33.0L29.0 -30.9L30.2 -28.8L31.3 -26.7L32.2 -24.5L33.0 -22.3L33.6 -20.1L34.1 -17.8L34.5 -15.6L34.7 -13.5L34.8 -11.3L34.8 -9.2L34.6 -7.1L34.3 -5.0L33.9 -3.0L33.4 -1.1L32.7 0.7L32.0 2.5L31.2 4.2L30.3 5.8L29.3 7.4L28.2 8.8L27.1 10.1L25.9 11.4L24.6 12.5L23.3 13.6L22.0 14.5L20.6 15.3L19.2 16.0L17.8 16.6L16.4 17.2L15.0 17.6L13.6 17.9L12.3 18.1L10.9 18.2L9.6 18.2L8.3 18.1L7.0 17.9L5.8 17.7L4.6 17.4L3.5 17.0L2.5 16.5L1.5 16.0L0.5 15.4L-0.3 14.8L-1.1 14.1L-1.8 13.4L-2.4 12.6L-3.0 11.8L-3.4 11.0L-3.8 10.2L-4.1 9.4L-4.3 8.6L-4.5 7.8L-4.6 7.0L-4.6 6.2L-4.5 5.4L-4.4 4.7L-4.2 4.0L-3.9 3.3L-3.6 2.7L-3.2 2.2L-2.8 1.7L-2.3 1.2L-1.8 0.8L-1.2 0.5L-0.6 0.2L-0.0 0.0Z" fill-opacity="0.017"/>
<path d="M-0.0 0.0L0.0 0.6L0.1 1.3L0.2 1.9L0.4 2.5L0.7 3.1L1.1 3.7L1.5 4.2L2.0 4.7L2.5 5.2L3.1 5.6L3.8 6.0L4.5 6.3L5.2 6.5L6.0 6.7L6.8 6.8L7.7 6.8L8.5 6.8L9.4 6.7L10.3 6.5L11.3 6.2L12.2 5.8L13.1 5.4L13.9 4.8L14.8 4.2L15.7 3.5L16.5 2.8L17.2 1.9L17.9 1.0L18.6 -0.0L19.2 -1.1L19.8 -2.3L20.2 -3.5L20.6 -4.7L21.0 -6.1L21.2 -7.4L21.3 -8.9L21.4 -10.3L21.3 -11.8L21.2 -13.3L20.9 -14.9L20.6 -16.4L20.1 -18.0L19.5 -19.5L18.8 -21.1L18.0 -22.6L17.1 -24.1L16.0 -25.6L14.9 -27.0L13.6 -28.3L12.3 -29.7L10.8 -30.9L9.2 -32.1L7.6 -33.2L5.8 -34.2L4.0 -35.1L2.0 -35.9L0.0 -36.6L-2.1 -37.2L-4.2 -37.6L-6.4 -38.0L-8.7 -38.2L-11.0 -38.3L-13.3 -38.2L-15.7 -38.0L-18.1 -37.6L-20.5 -37.1L-22.8 -36.5L-25.2 -35.6L-27.6 -34.7L-29.9 -33.6L-32.2 -32.3L-34.4 -30.9L-36.6 -29.3L-38.7 -27.6L-40.7 -25.7L-42.7 -23.7L-44.5 -21.5L-46.2 -19.3L-47.8 -16.9L-49.3 -14.3L-50.7 -11.7L-51.9 -8.9L-52.9 -6.1L-53.8 -3.2L-54.6 -0.1L-55.1 2.9L-55.5 6.1L-55.7 9.3L-55.7 12.6L-55.6 15.8L-54.9 18.0L-54.2 20.1L-53.3 22.3L-52.4 24.3L-51.4 26.4L-50.3 28.4L-49.2 30.3L-48.0 32.2L-48.0 32.2L-49.1 29.2L-50.1 26.1L-50.9 23.0L-51.5 19.8L-51.9 16.7L-52.2 13.6L-52.2 10.6L-52.1 7.5L-51.8 4.5L-51.3 1.6L-50.7 -1.2L-49.9 -4.0L-49.0 -6.7L-47.9 -9.3L-46.7 -11.9L-45.3 -14.3L-43.8 -16.5L-42.3 -18.7L-40.6 -20.8L-38.8 -22.7L-36.9 -24.5L-35.0 -26.1L-33.0 -27.6L-30.9 -29.0L-28.8 -30.2L-26.7 -31.3L-24.5 -32.2L-22.3 -33.0L-20.1 -33.6L-17.8 -34.1L-15.6 -34.5L-13.5 -34.7L-11.3 -34.8L-9.2 -34.8L-7.1 -34.6L-5.0 -34.3L-3.0 -33.9L-1.1 -33.4L0.7 -32.7L2.5 -32.0L4.2 -31.2L5.8 -30.3L7.4 -29.3L8.8 -28.2L10.1 -27.1L11.4 -25.9L12.5 -24.6L13.6 -23.3L14.5 -22.0L15.3 -20.6L16.0 -19.2L16.6 -17.8L17.2 -16.4L17.6 -15.0L17.9 -13.6L18.1 -12.3L18.2 -10.9L18.2 -9.6L18.1 -8.3L17.9 -7.0L17.7 -5.8L17.4 -4.6L17.0 -3.5L16.5 -2.5L16.0 -1.5L15.4 -0.5L14.8 0.3L14.1 1.1L13.4 1.8L12.6 2.4L11.8 3.0L11.0 3.4L10.2 3.8L9.4 4.1L8.6 4.3L7.8 4.5L7.0 4.6L6.2 4.6L5.4 4.5L4.7 4.4L4.0 4.2L3.3 3.9L2.7 3.6L2.2 3.2L1.7 2.8L1.2 2.3L0.8 1.8L0.5 1.2L0.2 0.6L0.0 0.0ZM0.0 -0.0L-0.0 -0.6L-0.1 -1.3L-0.2 -1.9L-0.4 -2.5L-0.7 -3.1L-1.1 -3.7L-1.5 -4.2L-2.0 -4.7L-2.5 -5.2L-3.1 -5.6L-3.8 -6.0L-4.5 -6.3L-5.2 -6.5L-6.0 -6.7L-6.8 -6.8L-7.7 -6.8L-8.5 -6.8L-9.4 -6.7L-10.3 -6.5L-11.3 -6.2L-12.2 -5.8L-13.1 -5.4L-13.9 -4.8L-14.8 -4.2L-15.7 -3.5L-16.5 -2.8L-17.2 -1.9L-17.9 -1.0L-18.6 0.0L-19.2 1.1L-19.8 2.3L-20.2 3.5L-20.6 4.7L-21.0 6.1L-21.2 7.4L-21.3 8.9L-21.4 10.3L-21.3 11.8L-21.2 13.3L-20.9 14.9L-20.6 16.4L-20.1 18.0L-19.5 19.5L-18.8 21.1L-18.0 22.6L-17.1 24.1L-16.0 25.6L-14.9 27.0L-13.6 28.3L-12.3 29.7L-10.8 30.9L-9.2 32.1L-7.6 33.2L-5.8 34.2L-4.0 35.1L-2.0 35.9L-0.0 36.6L2.1 37.2L4.2 37.6L6.4 38.0L8.7 38.2L11.0 38.3L13.3 38.2L15.7 38.0L18.1 37.6L20.5 37.1L22.8 36.5L25.2 35.6L27.6 34.7L29.9 33.6L32.2 32.3L34.4 30.9L36.6 29.3L38.7 27.6L40.7 25.7L42.7 23.7L44.5 21.5L46.2 19.3L47.8 16.9L49.3 14.3L50.7 11.7L51.9 8.9L52.9 6.1L53.8 3.2L54.6 0.1L55.1 -2.9L55.5 -6.1L55.7 -9.3L55.7 -12.6L55.6 -15.8L54.9 -18.0L54.2 -20.1L53.3 -22.3L52.4 -24.3L51.4 -26.4L50.3 -28.4L49.2 -30.3L48.0 -32.2L48.0 -32.2L49.1 -29.2L50.1 -26.1L50.9 -23.0L51.5 -19.8L51.9 -16.7L52.2 -13.6L52.2 -10.6L52.1 -7.5L51.8 -4.5L51.3 -1.6L50.7 1.2L49.9 4.0L49.0 6.7L47.9 9.3L46.7 11.9L45.3 14.3L43.8 16.5L42.3 18.7L40.6 20.8L38.8 22.7L36.9 24.5L35.0 26.1L33.0 27.6L30.9 29.0L28.8 30.2L26.7 31.3L24.5 32.2L22.3 33.0L20.1 33.6L17.8 34.1L15.6 34.5L13.5 34.7L11.3 34.8L9.2 34.8L7.1 34.6L5.0 34.3L3.0 33.9L1.1 33.4L-0.7 32.7L-2.5 32.0L-4.2 31.2L-5.8 30.3L-7.4 29.3L-8.8 28.2L-10.1 27.1L-11.4 25.9L-12.5 24.6L-13.6 23.3L-14.5 22.0L-15.3 20.6L-16.0 19.2L-16.6 17.8L-17.2 16.4L-17.6 15.0L-17.9 13.6L-18.1 12.3L-18.2 10.9L-18.2 9.6L-18.1 8.3L-17.9 7.0L-17.7 5.8L-17.4 4.6L-17.0 3.5L-16.5 2.5L-16.0 1.5L-15.4 0.5L-14.8 -0.3L-14.1 -1.1L-13.4 -1.8L-12.6 -2.4L-11.8 -3.0L-11.0 -3.4L-10.2 -3.8L-9.4 -4.1L-8.6 -4.3L-7.8 -4.5L-7.0 -4.6L-6.2 -4.6L-5.4 -4.5L-4.7 -4.4L-4.0 -4.2L-3.3 -3.9L-2.7 -3.6L-2.2 -3.2L-1.7 -2.8L-1.2 -2.3L-0.8 -1.8L-0.5 -1.2L-0.2 -0.6L-0.0 -0.0Z" fill-opacity="0.07"/>
<path d="M0.0 0.0L0.6 -0.0L1.3 -0.1L1.9 -0.2L2.5 -0.4L3.1 -0.7L3.7 -1.1L4.2 -1.5L4.7 -2.0L5.2 -2.5L5.6 -3.1L6.0 -3.8L6.3 -4.5L6.5 -5.2L6.7 -6.0L6.8 -6.8L6.8 -7.7L6.8 -8.5L6.7 -9.4L6.5 -10.3L6.2 -11.3L5.8 -12.2L5.4 -13.1L4.8 -13.9L4.2 -14.8L3.5 -15.7L2.8 -16.5L1.9 -17.2L1.0 -17.9L-0.0 -18.6L-1.1 -19.2L-2.3 -19.8L-3.5 -20.2L-4.7 -20.6L-6.1 -21.0L-7.4 -21.2L-8.9 -21.3L-10.3 -21.4L-11.8 -21.3L-13.3 -21.2L-14.9 -20.9L-16.4 -20.6L-18.0 -20.1L-19.5 -19.5L-21.1 -18.8L-22.6 -18.0L-24.1 -17.1L-25.6 -16.0L-27.0 -14.9L-28.3 -13.6L-29.7 -12.3L-30.9 -10.8L-32.1 -9.2L-33.2 -7.6L-34.2 -5.8L-35.1 -4.0L-35.9 -2.0L-36.6 -0.0L-37.2 2.1L-37.6 4.2L-38.0 6.4L-38.2 8.7L-38.3 11.0L-38.2 13.3L-38.0 15.7L-37.6 18.1L-37.1 20.5L-36.5 22.8L-35.6 25.2L-34.7 27.6L-33.6 29.9L-32.3 32.2L-30.9 34.4L-29.3 36.6L-27.6 38.7L-25.7 40.7L-23.7 42.7L-21.5 44.5L-19.3 46.2L-16.9 47.8L-14.3 49.3L-11.7 50.7L-8.9 51.9L-6.1 52.9L-3.2 53.8L-0.1 54.6L2.9 55.1L6.1 55.5L9.3 55.7L12.6 55.7L15.8 55.6L18.0 54.9L20.1 54.2L22.3 53.3L24.3 52.4L26.4 51.4L28.4 50.3L30.3 49.2L32.2 48.0L32.2 48.0L29.2 49.1L26.1 50.1L23.0 50.9L19.8 51.5L16.7 51.9L13.6 52.2L10.6 52.2L7.5 52.1L4.5 51.8L1.6 51.3L-1.2 50.7L-4.0 49.9L-6.7 49.0L-9.3 47.9L-11.9 46.7L-14.3 45.3L-16.5 43.8L-18.7 42.3L-20.8 40.6L-22.7 38.8L-24.5 36.9L-26.1 35.0L-27.6 33.0L-29.0 30.9L-30.2 28.8L-31.3 26.7L-32.2 24.5L-33.0 22.3L-33.6 20.1L-34.1 17.8L-34.5 15.6L-34.7 13.5L-34.8 11.3L-34.8 9.2L-34.6 7.1L-34.3 5.0L-33.9 3.0L-33.4 1.1L-32.7 -0.7L-32.0 -2.5L-31.2 -4.2L-30.3 -5.8L-29.3 -7.4L-28.2 -8.8L-27.1 -10.1L-25.9 -11.4L-24.6 -12.5L-23.3 -13.6L-22.0 -14.5L-20.6 -15.3L-19.2 -16.0L-17.8 -16.6L-16.4 -17.2L-15.0 -17.6L-13.6 -17.9L-12.3 -18.1L-10.9 -18.2L-9.6 -18.2L-8.3 -18.1L-7.0 -17.9L-5.8 -17.7L-4.6 -17.4L-3.5 -17.0L-2.5 -16.5L-1.5 -16.0L-0.5 -15.4L0.3 -14.8L1.1 -14.1L1.8 -13.4L2.4 -12.6L3.0 -11.8L3.4 -11.0L3.8 -10.2L4.1 -9.4L4.3 -8.6L4.5 -7.8L4.6 -7.0L4.6 -6.2L4.5 -5.4L4.4 -4.7L4.2 -4.0L3.9 -3.3L3.6 -2.7L3.2 -2.2L2.8 -1.7L2.3 -1.2L1.8 -0.8L1.2 -0.5L0.6 -0.2L0.0 -0.0ZM-0.0 -0.0L-0.6 0.0L-1.3 0.1L-1.9 0.2L-2.5 0.4L-3.1 0.7L-3.7 1.1L-4.2 1.5L-4.7 2.0L-5.2 2.5L-5.6 3.1L-6.0 3.8L-6.3 4.5L-6.5 5.2L-6.7 6.0L-6.8 6.8L-6.8 7.7L-6.8 8.5L-6.7 9.4L-6.5 10.3L-6.2 11.3L-5.8 12.2L-5.4 13.1L-4.8 13.9L-4.2 14.8L-3.5 15.7L-2.8 16.5L-1.9 17.2L-1.0 17.9L0.0 18.6L1.1 19.2L2.3 19.8L3.5 20.2L4.7 20.6L6.1 21.0L7.4 21.2L8.9 21.3L10.3 21.4L11.8 21.3L13.3 21.2L14.9 20.9L16.4 20.6L18.0 20.1L19.5 19.5L21.1 18.8L22.6 18.0L24.1 17.1L25.6 16.0L27.0 14.9L28.3 13.6L29.7 12.3L30.9 10.8L32.1 9.2L33.2 7.6L34.2 5.8L35.1 4.0L35.9 2.0L36.6 0.0L37.2 -2.1L37.6 -4.2L38.0 -6.4L38.2 -8.7L38.3 -11.0L38.2 -13.3L38.0 -15.7L37.6 -18.1L37.1 -20.5L36.5 -22.8L35.6 -25.2L34.7 -27.6L33.6 -29.9L32.3 -32.2L30.9 -34.4L29.3 -36.6L27.6 -38.7L25.7 -40.7L23.7 -42.7L21.5 -44.5L19.3 -46.2L16.9 -47.8L14.3 -49.3L11.7 -50.7L8.9 -51.9L6.1 -52.9L3.2 -53.8L0.1 -54.6L-2.9 -55.1L-6.1 -55.5L-9.3 -55.7L-12.6 -55.7L-15.8 -55.6L-18.0 -54.9L-20.1 -54.2L-22.3 -53.3L-24.3 -52.4L-26.4 -51.4L-28.4 -50.3L-30.3 -49.2L-32.2 -48.0L-32.2 -48.0L-29.2 -49.1L-26.1 -50.1L-23.0 -50.9L-19.8 -51.5L-16.7 -51.9L-13.6 -52.2L-10.6 -52.2L-7.5 -52.1L-4.5 -51.8L-1.6 -51.3L1.2 -50.7L4.0 -49.9L6.7 -49.0L9.3 -47.9L11.9 -46.7L14.3 -45.3L16.5 -43.8L18.7 -42.3L20.8 -40.6L22.7 -38.8L24.5 -36.9L26.1 -35.0L27.6 -33.0L29.0 -30.9L30.2 -28.8L31.3 -26.7L32.2 -24.5L33.0 -22.3L33.6 -20.1L34.1 -17.8L34.5 -15.6L34.7 -13.5L34.8 -11.3L34.8 -9.2L34.6 -7.1L34.3 -5.0L33.9 -3.0L33.4 -1.1L32.7 0.7L32.0 2.5L31.2 4.2L30.3 5.8L29.3 7.4L28.2 8.8L27.1 10.1L25.9 11.4L24.6 12.5L23.3 13.6L22.0 14.5L20.6 15.3L19.2 16.0L17.8 16.6L16.4 17.2L15.0 17.6L13.6 17.9L12.3 18.1L10.9 18.2L9.6 18.2L8.3 18.1L7.0 17.9L5.8 17.7L4.6 17.4L3.5 17.0L2.5 16.5L1.5 16.0L0.5 15.4L-0.3 14.8L-1.1 14.1L-1.8 13.4L-2.4 12.6L-3.0 11.8L-3.4 11.0L-3.8 10.2L-4.1 9.4L-4.3 8.6L-4.5 7.8L-4.6 7.0L-4.6 6.2L-4.5 5.4L-4.4 4.7L-4.2 4.0L-3.9 3.3L-3.6 2.7L-3.2 2.2L-2.8 1.7L-2.3 1.2L-1.8 0.8L-1.2 0.5L-0.6 0.2L-0.0 0.0Z" fill-opacity="0.025"/>
<path d="M0.0 0.0L0.1 0.6L0.3 1.3L0.5 1.9L0.8 2.4L1.2 3.0L1.6 3.5L2.1 4.0L2.7 4.4L3.3 4.7L4.0 5.1L4.7 5.3L5.4 5.5L6.2 5.6L7.0 5.7L7.8 5.6L8.6 5.5L9.5 5.4L10.4 5.1L11.2 4.8L12.1 4.3L12.9 3.8L13.7 3.3L14.5 2.6L15.3 1.9L16.0 1.0L16.7 0.2L17.3 -0.8L17.9 -1.8L18.4 -2.9L18.8 -4.1L19.2 -5.3L19.5 -6.6L19.7 -7.9L19.8 -9.3L19.8 -10.7L19.7 -12.1L19.5 -13.5L19.2 -15.0L18.8 -16.5L18.3 -18.0L17.7 -19.4L17.0 -20.9L16.2 -22.3L15.3 -23.8L14.2 -25.1L13.1 -26.5L11.9 -27.7L10.5 -29.0L9.0 -30.1L7.5 -31.2L5.8 -32.2L4.1 -33.1L2.3 -33.9L0.4 -34.7L-1.6 -35.3L-3.6 -35.8L-5.7 -36.1L-7.9 -36.4L-10.1 -36.5L-12.3 -36.5L-14.5 -36.4L-16.8 -36.1L-19.1 -35.6L-21.4 -35.1L-23.7 -34.3L-26.0 -33.5L-28.3 -32.4L-30.5 -31.3L-32.7 -29.9L-34.8 -28.5L-36.8 -26.9L-38.8 -25.1L-40.7 -23.2L-42.5 -21.2L-44.2 -19.0L-45.8 -16.7L-47.3 -14.3L-48.7 -11.8L-49.9 -9.2L-51.0 -6.4L-51.9 -3.6L-52.6 -0.7L-53.2 2.3L-53.7 5.3L-53.9 8.4L-54.0 11.5L-53.9 14.7L-53.6 17.9L-53.1 21.1L-52.4 24.3L-51.9 25.4L-51.4 26.4L-50.9 27.4L-50.3 28.4L-49.8 29.3L-49.2 30.3L-48.6 31.3L-48.0 32.2L-48.0 32.2L-49.1 29.2L-50.1 26.1L-50.9 23.0L-51.5 19.8L-51.9 16.7L-52.2 13.6L-52.2 10.6L-52.1 7.5L-51.8 4.5L-51.3 1.6L-50.7 -1.2L-49.9 -4.0L-49.0 -6.7L-47.9 -9.3L-46.7 -11.9L-45.3 -14.3L-43.8 -16.5L-42.3 -18.7L-40.6 -20.8L-38.8 -22.7L-36.9 -24.5L-35.0 -26.1L-33.0 -27.6L-30.9 -29.0L-28.8 -30.2L-26.7 -31.3L-24.5 -32.2L-22.3 -33.0L-20.1 -33.6L-17.8 -34.1L-15.6 -34.5L-13.5 -34.7L-11.3 -34.8L-9.2 -34.8L-7.1 -34.6L-5.0 -34.3L-3.0 -33.9L-1.1 -33.4L0.7 -32.7L2.5 -32.0L4.2 -31.2L5.8 -30.3L7.4 -29.3L8.8 -28.2L10.1 -27.1L11.4 -25.9L12.5 -24.6L13.6 -23.3L14.5 -22.0L15.3 -20.6L16.0 -19.2L16.6 -17.8L17.2 -16.4L17.6 -15.0L17.9 -13.6L18.1 -12.3L18.2 -10.9L18.2 -9.6L18.1 -8.3L17.9 -7.0L17.7 -5.8L17.4 -4.6L17.0 -3.5L16.5 -2.5L16.0 -1.5L15.4 -0.5L14.8 0.3L14.1 1.1L13.4 1.8L12.6 2.4L11.8 3.0L11.0 3.4L10.2 3.8L9.4 4.1L8.6 4.3L7.8 4.5L7.0 4.6L6.2 4.6L5.4 4.5L4.7 4.4L4.0 4.2L3.3 3.9L2.7 3.6L2.2 3.2L1.7 2.8L1.2 2.3L0.8 1.8L0.5 1.2L0.2 0.6L0.0 0.0ZM-0.0 -0.0L-0.1 -0.6L-0.3 -1.3L-0.5 -1.9L-0.8 -2.4L-1.2 -3.0L-1.6 -3.5L-2.1 -4.0L-2.7 -4.4L-3.3 -4.7L-4.0 -5.1L-4.7 -5.3L-5.4 -5.5L-6.2 -5.6L-7.0 -5.7L-7.8 -5.6L-8.6 -5.5L-9.5 -5.4L-10.4 -5.1L-11.2 -4.8L-12.1 -4.3L-12.9 -3.8L-13.7 -3.3L-14.5 -2.6L-15.3 -1.9L-16.0 -1.0L-16.7 -0.2L-17.3 0.8L-17.9 1.8L-18.4 2.9L-18.8 4.1L-19.2 5.3L-19.5 6.6L-19.7 7.9L-19.8 9.3L-19.8 10.7L-19.7 12.1L-19.5 13.5L-19.2 15.0L-18.8 16.5L-18.3 18.0L-17.7 19.4L-17.0 20.9L-16.2 22.3L-15.3 23.8L-14.2 25.1L-13.1 26.5L-11.9 27.7L-10.5 29.0L-9.0 30.1L-7.5 31.2L-5.8 32.2L-4.1 33.1L-2.3 33.9L-0.4 34.7L1.6 35.3L3.6 35.8L5.7 36.1L7.9 36.4L10.1 36.5L12.3 36.5L14.5 36.4L16.8 36.1L19.1 35.6L21.4 35.1L23.7 34.3L26.0 33.5L28.3 32.4L30.5 31.3L32.7 29.9L34.8 28.5L36.8 26.9L38.8 25.1L40.7 23.2L42.5 21.2L44.2 19.0L45.8 16.7L47.3 14.3L48.7 11.8L49.9 9.2L51.0 6.4L51.9 3.6L52.6 0.7L53.2 -2.3L53.7 -5.3L53.9 -8.4L54.0 -11.5L53.9 -14.7L53.6 -17.9L53.1 -21.1L52.4 -24.3L51.9 -25.4L51.4 -26.4L50.9 -27.4L50.3 -28.4L49.8 -29.3L49.2 -30.3L48.6 -31.3L48.0 -32.2L48.0 -32.2L49.1 -29.2L50.1 -26.1L50.9 -23.0L51.5 -19.8L51.9 -16.7L52.2 -13.6L52.2 -10.6L52.1 -7.5L51.8 -4.5L51.3 -1.6L50.7 1.2L49.9 4.0L49.0 6.7L47.9 9.3L46.7 11.9L45.3 14.3L43.8 16.5L42.3 18.7L40.6 20.8L38.8 22.7L36.9 24.5L35.0 26.1L33.0 27.6L30.9 29.0L28.8 30.2L26.7 31.3L24.5 32.2L22.3 33.0L20.1 33.6L17.8 34.1L15.6 34.5L13.5 34.7L11.3 34.8L9.2 34.8L7.1 34.6L5.0 34.3L3.0 33.9L1.1 33.4L-0.7 32.7L-2.5 32.0L-4.2 31.2L-5.8 30.3L-7.4 29.3L-8.8 28.2L-10.1 27.1L-11.4 25.9L-12.5 24.6L-13.6 23.3L-14.5 22.0L-15.3 20.6L-16.0 19.2L-16.6 17.8L-17.2 16.4L-17.6 15.0L-17.9 13.6L-18.1 12.3L-18.2 10.9L-18.2 9.6L-18.1 8.3L-17.9 7.0L-17.7 5.8L-17.4 4.6L-17.0 3.5L-16.5 2.5L-16.0 1.5L-15.4 0.5L-14.8 -0.3L-14.1 -1.1L-13.4 -1.8L-12.6 -2.4L-11.8 -3.0L-11.0 -3.4L-10.2 -3.8L-9.4 -4.1L-8.6 -4.3L-7.8 -4.5L-7.0 -4.6L-6.2 -4.6L-5.4 -4.5L-4.7 -4.4L-4.0 -4.2L-3.3 -3.9L-2.7 -3.6L-2.2 -3.2L-1.7 -2.8L-1.2 -2.3L-0.8 -1.8L-0.5 -1.2L-0.2 -0.6L-0.0 -0.0Z" fill-opacity="0.1"/>
<path d="M0.0 -0.0L0.6 -0.1L1.3 -0.3L1.9 -0.5L2.4 -0.8L3.0 -1.2L3.5 -1.6L4.0 -2.1L4.4 -2.7L4.7 -3.3L5.1 -4.0L5.3 -4.7L5.5 -5.4L5.6 -6.2L5.7 -7.0L5.6 -7.8L5.5 -8.6L5.4 -9.5L5.1 -10.4L4.8 -11.2L4.3 -12.1L3.8 -12.9L3.3 -13.7L2.6 -14.5L1.9 -15.3L1.0 -16.0L0.2 -16.7L-0.8 -17.3L-1.8 -17.9L-2.9 -18.4L-4.1 -18.8L-5.3 -19.2L-6.6 -19.5L-7.9 -19.7L-9.3 -19.8L-10.7 -19.8L-12.1 -19.7L-13.5 -19.5L-15.0 -19.2L-16.5 -18.8L-18.0 -18.3L-19.4 -17.7L-20.9 -17.0L-22.3 -16.2L-23.8 -15.3L-25.1 -14.2L-26.5 -13.1L-27.7 -11.9L-29.0 -10.5L-30.1 -9.0L-31.2 -7.5L-32.2 -5.8L-33.1 -4.1L-33.9 -2.3L-34.7 -0.4L-35.3 1.6L-35.8 3.6L-36.1 5.7L-36.4 7.9L-36.5 10.1L-36.5 12.3L-36.4 14.5L-36.1 16.8L-35.6 19.1L-35.1 21.4L-34.3 23.7L-33.5 26.0L-32.4 28.3L-31.3 30.5L-29.9 32.7L-28.5 34.8L-26.9 36.8L-25.1 38.8L-23.2 40.7L-21.2 42.5L-19.0 44.2L-16.7 45.8L-14.3 47.3L-11.8 48.7L-9.2 49.9L-6.4 51.0L-3.6 51.9L-0.7 52.6L2.3 53.2L5.3 53.7L8.4 53.9L11.5 54.0L14.7 53.9L17.9 53.6L21.1 53.1L24.3 52.4L25.4 51.9L26.4 51.4L27.4 50.9L28.4 50.3L29.3 49.8L30.3 49.2L31.3 48.6L32.2 48.0L32.2 48.0L29.2 49.1L26.1 50.1L23.0 50.9L19.8 51.5L16.7 51.9L13.6 52.2L10.6 52.2L7.5 52.1L4.5 51.8L1.6 51.3L-1.2 50.7L-4.0 49.9L-6.7 49.0L-9.3 47.9L-11.9 46.7L-14.3 45.3L-16.5 43.8L-18.7 42.3L-20.8 40.6L-22.7 38.8L-24.5 36.9L-26.1 35.0L-27.6 33.0L-29.0 30.9L-30.2 28.8L-31.3 26.7L-32.2 24.5L-33.0 22.3L-33.6 20.1L-34.1 17.8L-34.5 15.6L-34.7 13.5L-34.8 11.3L-34.8 9.2L-34.6 7.1L-34.3 5.0L-33.9 3.0L-33.4 1.1L-32.7 -0.7L-32.0 -2.5L-31.2 -4.2L-30.3 -5.8L-29.3 -7.4L-28.2 -8.8L-27.1 -10.1L-25.9 -11.4L-24.6 -12.5L-23.3 -13.6L-22.0 -14.5L-20.6 -15.3L-19.2 -16.0L-17.8 -16.6L-16.4 -17.2L-15.0 -17.6L-13.6 -17.9L-12.3 -18.1L-10.9 -18.2L-9.6 -18.2L-8.3 -18.1L-7.0 -17.9L-5.8 -17.7L-4.6 -17.4L-3.5 -17.0L-2.5 -16.5L-1.5 -16.0L-0.5 -15.4L0.3 -14.8L1.1 -14.1L1.8 -13.4L2.4 -12.6L3.0 -11.8L3.4 -11.0L3.8 -10.2L4.1 -9.4L4.3 -8.6L4.5 -7.8L4.6 -7.0L4.6 -6.2L4.5 -5.4L4.4 -4.7L4.2 -4.0L3.9 -3.3L3.6 -2.7L3.2 -2.2L2.8 -1.7L2.3 -1.2L1.8 -0.8L1.2 -0.5L0.6 -0.2L0.0 -0.0ZM-0.0 0.0L-0.6 0.1L-1.3 0.3L-1.9 0.5L-2.4 0.8L-3.0 1.2L-3.5 1.6L-4.0 2.1L-4.4 2.7L-4.7 3.3L-5.1 4.0L-5.3 4.7L-5.5 5.4L-5.6 6.2L-5.7 7.0L-5.6 7.8L-5.5 8.6L-5.4 9.5L-5.1 10.4L-4.8 11.2L-4.3 12.1L-3.8 12.9L-3.3 13.7L-2.6 14.5L-1.9 15.3L-1.0 16.0L-0.2 16.7L0.8 17.3L1.8 17.9L2.9 18.4L4.1 18.8L5.3 19.2L6.6 19.5L7.9 19.7L9.3 19.8L10.7 19.8L12.1 19.7L13.5 19.5L15.0 19.2L16.5 18.8L18.0 18.3L19.4 17.7L20.9 17.0L22.3 16.2L23.8 15.3L25.1 14.2L26.5 13.1L27.7 11.9L29.0 10.5L30.1 9.0L31.2 7.5L32.2 5.8L33.1 4.1L33.9 2.3L34.7 0.4L35.3 -1.6L35.8 -3.6L36.1 -5.7L36.4 -7.9L36.5 -10.1L36.5 -12.3L36.4 -14.5L36.1 -16.8L35.6 -19.1L35.1 -21.4L34.3 -23.7L33.5 -26.0L32.4 -28.3L31.3 -30.5L29.9 -32.7L28.5 -34.8L26.9 -36.8L25.1 -38.8L23.2 -40.7L21.2 -42.5L19.0 -44.2L16.7 -45.8L14.3 -47.3L11.8 -48.7L9.2 -49.9L6.4 -51.0L3.6 -51.9L0.7 -52.6L-2.3 -53.2L-5.3 -53.7L-8.4 -53.9L-11.5 -54.0L-14.7 -53.9L-17.9 -53.6L-21.1 -53.1L-24.3 -52.4L-25.4 -51.9L-26.4 -51.4L-27.4 -50.9L-28.4 -50.3L-29.3 -49.8L-30.3 -49.2L-31.3 -48.6L-32.2 -48.0L-32.2 -48.0L-29.2 -49.1L-26.1 -50.1L-23.0 -50.9L-19.8 -51.5L-16.7 -51.9L-13.6 -52.2L-10.6 -52.2L-7.5 -52.1L-4.5 -51.8L-1.6 -51.3L1.2 -50.7L4.0 -49.9L6.7 -49.0L9.3 -47.9L11.9 -46.7L14.3 -45.3L16.5 -43.8L18.7 -42.3L20.8 -40.6L22.7 -38.8L24.5 -36.9L26.1 -35.0L27.6 -33.0L29.0 -30.9L30.2 -28.8L31.3 -26.7L32.2 -24.5L33.0 -22.3L33.6 -20.1L34.1 -17.8L34.5 -15.6L34.7 -13.5L34.8 -11.3L34.8 -9.2L34.6 -7.1L34.3 -5.0L33.9 -3.0L33.4 -1.1L32.7 0.7L32.0 2.5L31.2 4.2L30.3 5.8L29.3 7.4L28.2 8.8L27.1 10.1L25.9 11.4L24.6 12.5L23.3 13.6L22.0 14.5L20.6 15.3L19.2 16.0L17.8 16.6L16.4 17.2L15.0 17.6L13.6 17.9L12.3 18.1L10.9 18.2L9.6 18.2L8.3 18.1L7.0 17.9L5.8 17.7L4.6 17.4L3.5 17.0L2.5 16.5L1.5 16.0L0.5 15.4L-0.3 14.8L-1.1 14.1L-1.8 13.4L-2.4 12.6L-3.0 11.8L-3.4 11.0L-3.8 10.2L-4.1 9.4L-4.3 8.6L-4.5 7.8L-4.6 7.0L-4.6 6.2L-4.5 5.4L-4.4 4.7L-4.2 4.0L-3.9 3.3L-3.6 2.7L-3.2 2.2L-2.8 1.7L-2.3 1.2L-1.8 0.8L-1.2 0.5L-0.6 0.2L-0.0 0.0Z" fill-opacity="0.035"/>
<path d="M0.0 0.0L0.2 0.6L0.4 1.2L0.7 1.8L1.0 2.4L1.4 2.9L1.9 3.3L2.4 3.8L3.0 4.1L3.7 4.5L4.3 4.7L5.1 4.9L5.8 5.1L6.6 5.1L7.4 5.1L8.2 5.0L9.1 4.8L9.9 4.6L10.7 4.3L11.6 3.9L12.4 3.4L13.2 2.8L14.0 2.2L14.7 1.5L15.4 0.7L16.0 -0.2L16.7 -1.2L17.2 -2.2L17.7 -3.2L18.1 -4.4L18.4 -5.6L18.7 -6.8L18.9 -8.1L19.0 -9.4L19.0 -10.8L18.9 -12.2L18.7 -13.6L18.4 -15.0L18.0 -16.5L17.5 -17.9L16.9 -19.4L16.2 -20.8L15.3 -22.2L14.4 -23.5L13.4 -24.9L12.2 -26.2L11.0 -27.4L9.6 -28.6L8.2 -29.7L6.7 -30.7L5.0 -31.7L3.3 -32.6L1.5 -33.4L-0.4 -34.0L-2.3 -34.6L-4.3 -35.0L-6.4 -35.4L-8.5 -35.6L-10.7 -35.7L-12.9 -35.6L-15.1 -35.4L-17.4 -35.1L-19.6 -34.6L-21.9 -34.0L-24.1 -33.3L-26.3 -32.4L-28.5 -31.3L-30.7 -30.1L-32.8 -28.8L-34.9 -27.3L-36.9 -25.6L-38.8 -23.9L-40.7 -22.0L-42.4 -19.9L-44.1 -17.8L-45.6 -15.5L-47.0 -13.1L-48.3 -10.6L-49.4 -7.9L-50.4 -5.2L-51.3 -2.4L-52.0 0.5L-52.5 3.4L-52.9 6.4L-53.1 9.5L-53.1 12.6L-52.9 15.7L-52.6 18.9L-52.0 22.1L-51.3 25.2L-50.3 28.4L-50.1 28.9L-49.8 29.3L-49.5 29.8L-49.2 30.3L-48.9 30.8L-48.6 31.3L-48.3 31.8L-48.0 32.2L-48.0 32.2L-49.1 29.2L-50.1 26.1L-50.9 23.0L-51.5 19.8L-51.9 16.7L-52.2 13.6L-52.2 10.6L-52.1 7.5L-51.8 4.5L-51.3 1.6L-50.7 -1.2L-49.9 -4.0L-49.0 -6.7L-47.9 -9.3L-46.7 -11.9L-45.3 -14.3L-43.8 -16.5L-42.3 -18.7L-40.6 -20.8L-38.8 -22.7L-36.9 -24.5L-35.0 -26.1L-33.0 -27.6L-30.9 -29.0L-28.8 -30.2L-26.7 -31.3L-24.5 -32.2L-22.3 -33.0L-20.1 -33.6L-17.8 -34.1L-15.6 -34.5L-13.5 -34.7L-11.3 -34.8L-9.2 -34.8L-7.1 -34.6L-5.0 -34.3L-3.0 -33.9L-1.1 -33.4L0.7 -32.7L2.5 -32.0L4.2 -31.2L5.8 -30.3L7.4 -29.3L8.8 -28.2L10.1 -27.1L11.4 -25.9L12.5 -24.6L13.6 -23.3L14.5 -22.0L15.3 -20.6L16.0 -19.2L16.6 -17.8L17.2 -16.4L17.6 -15.0L17.9 -13.6L18.1 -12.3L18.2 -10.9L18.2 -9.6L18.1 -8.3L17.9 -7.0L17.7 -5.8L17.4 -4.6L17.0 -3.5L16.5 -2.5L16.0 -1.5L15.4 -0.5L14.8 0.3L14.1 1.1L13.4 1.8L12.6 2.4L11.8 3.0L11.0 3.4L10.2 3.8L9.4 4.1L8.6 4.3L7.8 4.5L7.0 4.6L6.2 4.6L5.4 4.5L4.7 4.4L4.0 4.2L3.3 3.9L2.7 3.6L2.2 3.2L1.7 2.8L1.2 2.3L0.8 1.8L0.5 1.2L0.2 0.6L0.0 0.0ZM-0.0 -0.0L-0.2 -0.6L-0.4 -1.2L-0.7 -1.8L-1.0 -2.4L-1.4 -2.9L-1.9 -3.3L-2.4 -3.8L-3.0 -4.1L-3.7 -4.5L-4.3 -4.7L-5.1 -4.9L-5.8 -5.1L-6.6 -5.1L-7.4 -5.1L-8.2 -5.0L-9.1 -4.8L-9.9 -4.6L-10.7 -4.3L-11.6 -3.9L-12.4 -3.4L-13.2 -2.8L-14.0 -2.2L-14.7 -1.5L-15.4 -0.7L-16.0 0.2L-16.7 1.2L-17.2 2.2L-17.7 3.2L-18.1 4.4L-18.4 5.6L-18.7 6.8L-18.9 8.1L-19.0 9.4L-19.0 10.8L-18.9 12.2L-18.7 13.6L-18.4 15.0L-18.0 16.5L-17.5 17.9L-16.9 19.4L-16.2 20.8L-15.3 22.2L-14.4 23.5L-13.4 24.9L-12.2 26.2L-11.0 27.4L-9.6 28.6L-8.2 29.7L-6.7 30.7L-5.0 31.7L-3.3 32.6L-1.5 33.4L0.4 34.0L2.3 34.6L4.3 35.0L6.4 35.4L8.5 35.6L10.7 35.7L12.9 35.6L15.1 35.4L17.4 35.1L19.6 34.6L21.9 34.0L24.1 33.3L26.3 32.4L28.5 31.3L30.7 30.1L32.8 28.8L34.9 27.3L36.9 25.6L38.8 23.9L40.7 22.0L42.4 19.9L44.1 17.8L45.6 15.5L47.0 13.1L48.3 10.6L49.4 7.9L50.4 5.2L51.3 2.4L52.0 -0.5L52.5 -3.4L52.9 -6.4L53.1 -9.5L53.1 -12.6L52.9 -15.7L52.6 -18.9L52.0 -22.1L51.3 -25.2L50.3 -28.4L50.1 -28.9L49.8 -29.3L49.5 -29.8L49.2 -30.3L48.9 -30.8L48.6 -31.3L48.3 -31.8L48.0 -32.2L48.0 -32.2L49.1 -29.2L50.1 -26.1L50.9 -23.0L51.5 -19.8L51.9 -16.7L52.2 -13.6L52.2 -10.6L52.1 -7.5L51.8 -4.5L51.3 -1.6L50.7 1.2L49.9 4.0L49.0 6.7L47.9 9.3L46.7 11.9L45.3 14.3L43.8 16.5L42.3 18.7L40.6 20.8L38.8 22.7L36.9 24.5L35.0 26.1L33.0 27.6L30.9 29.0L28.8 30.2L26.7 31.3L24.5 32.2L22.3 33.0L20.1 33.6L17.8 34.1L15.6 34.5L13.5 34.7L11.3 34.8L9.2 34.8L7.1 34.6L5.0 34.3L3.0 33.9L1.1 33.4L-0.7 32.7L-2.5 32.0L-4.2 31.2L-5.8 30.3L-7.4 29.3L-8.8 28.2L-10.1 27.1L-11.4 25.9L-12.5 24.6L-13.6 23.3L-14.5 22.0L-15.3 20.6L-16.0 19.2L-16.6 17.8L-17.2 16.4L-17.6 15.0L-17.9 13.6L-18.1 12.3L-18.2 10.9L-18.2 9.6L-18.1 8.3L-17.9 7.0L-17.7 5.8L-17.4 4.6L-17.0 3.5L-16.5 2.5L-16.0 1.5L-15.4 0.5L-14.8 -0.3L-14.1 -1.1L-13.4 -1.8L-12.6 -2.4L-11.8 -3.0L-11.0 -3.4L-10.2 -3.8L-9.4 -4.1L-8.6 -4.3L-7.8 -4.5L-7.0 -4.6L-6.2 -4.6L-5.4 -4.5L-4.7 -4.4L-4.0 -4.2L-3.3 -3.9L-2.7 -3.6L-2.2 -3.2L-1.7 -2.8L-1.2 -2.3L-0.8 -1.8L-0.5 -1.2L-0.2 -0.6L-0.0 -0.0Z" fill-opacity="0.16"/>
<path d="M0.0 -0.0L0.6 -0.2L1.2 -0.4L1.8 -0.7L2.4 -1.0L2.9 -1.4L3.3 -1.9L3.8 -2.4L4.1 -3.0L4.5 -3.7L4.7 -4.3L4.9 -5.1L5.1 -5.8L5.1 -6.6L5.1 -7.4L5.0 -8.2L4.8 -9.1L4.6 -9.9L4.3 -10.7L3.9 -11.6L3.4 -12.4L2.8 -13.2L2.2 -14.0L1.5 -14.7L0.7 -15.4L-0.2 -16.0L-1.2 -16.7L-2.2 -17.2L-3.2 -17.7L-4.4 -18.1L-5.6 -18.4L-6.8 -18.7L-8.1 -18.9L-9.4 -19.0L-10.8 -19.0L-12.2 -18.9L-13.6 -18.7L-15.0 -18.4L-16.5 -18.0L-17.9 -17.5L-19.4 -16.9L-20.8 -16.2L-22.2 -15.3L-23.5 -14.4L-24.9 -13.4L-26.2 -12.2L-27.4 -11.0L-28.6 -9.6L-29.7 -8.2L-30.7 -6.7L-31.7 -5.0L-32.6 -3.3L-33.4 -1.5L-34.0 0.4L-34.6 2.3L-35.0 4.3L-35.4 6.4L-35.6 8.5L-35.7 10.7L-35.6 12.9L-35.4 15.1L-35.1 17.4L-34.6 19.6L-34.0 21.9L-33.3 24.1L-32.4 26.3L-31.3 28.5L-30.1 30.7L-28.8 32.8L-27.3 34.9L-25.6 36.9L-23.9 38.8L-22.0 40.7L-19.9 42.4L-17.8 44.1L-15.5 45.6L-13.1 47.0L-10.6 48.3L-7.9 49.4L-5.2 50.4L-2.4 51.3L0.5 52.0L3.4 52.5L6.4 52.9L9.5 53.1L12.6 53.1L15.7 52.9L18.9 52.6L22.1 52.0L25.2 51.3L28.4 50.3L28.9 50.1L29.3 49.8L29.8 49.5L30.3 49.2L30.8 48.9L31.3 48.6L31.8 48.3L32.2 48.0L32.2 48.0L29.2 49.1L26.1 50.1L23.0 50.9L19.8 51.5L16.7 51.9L13.6 52.2L10.6 52.2L7.5 52.1L4.5 51.8L1.6 51.3L-1.2 50.7L-4.0 49.9L-6.7 49.0L-9.3 47.9L-11.9 46.7L-14.3 45.3L-16.5 43.8L-18.7 42.3L-20.8 40.6L-22.7 38.8L-24.5 36.9L-26.1 35.0L-27.6 33.0L-29.0 30.9L-30.2 28.8L-31.3 26.7L-32.2 24.5L-33.0 22.3L-33.6 20.1L-34.1 17.8L-34.5 15.6L-34.7 13.5L-34.8 11.3L-34.8 9.2L-34.6 7.1L-34.3 5.0L-33.9 3.0L-33.4 1.1L-32.7 -0.7L-32.0 -2.5L-31.2 -4.2L-30.3 -5.8L-29.3 -7.4L-28.2 -8.8L-27.1 -10.1L-25.9 -11.4L-24.6 -12.5L-23.3 -13.6L-22.0 -14.5L-20.6 -15.3L-19.2 -16.0L-17.8 -16.6L-16.4 -17.2L-15.0 -17.6L-13.6 -17.9L-12.3 -18.1L-10.9 -18.2L-9.6 -18.2L-8.3 -18.1L-7.0 -17.9L-5.8 -17.7L-4.6 -17.4L-3.5 -17.0L-2.5 -16.5L-1.5 -16.0L-0.5 -15.4L0.3 -14.8L1.1 -14.1L1.8 -13.4L2.4 -12.6L3.0 -11.8L3.4 -11.0L3.8 -10.2L4.1 -9.4L4.3 -8.6L4.5 -7.8L4.6 -7.0L4.6 -6.2L4.5 -5.4L4.4 -4.7L4.2 -4.0L3.9 -3.3L3.6 -2.7L3.2 -2.2L2.8 -1.7L2.3 -1.2L1.8 -0.8L1.2 -0.5L0.6 -0.2L0.0 -0.0ZM-0.0 0.0L-0.6 0.2L-1.2 0.4L-1.8 0.7L-2.4 1.0L-2.9 1.4L-3.3 1.9L-3.8 2.4L-4.1 3.0L-4.5 3.7L-4.7 4.3L-4.9 5.1L-5.1 5.8L-5.1 6.6L-5.1 7.4L-5.0 8.2L-4.8 9.1L-4.6 9.9L-4.3 10.7L-3.9 11.6L-3.4 12.4L-2.8 13.2L-2.2 14.0L-1.5 14.7L-0.7 15.4L0.2 16.0L1.2 16.7L2.2 17.2L3.2 17.7L4.4 18.1L5.6 18.4L6.8 18.7L8.1 18.9L9.4 19.0L10.8 19.0L12.2 18.9L13.6 18.7L15.0 18.4L16.5 18.0L17.9 17.5L19.4 16.9L20.8 16.2L22.2 15.3L23.5 14.4L24.9 13.4L26.2 12.2L27.4 11.0L28.6 9.6L29.7 8.2L30.7 6.7L31.7 5.0L32.6 3.3L33.4 1.5L34.0 -0.4L34.6 -2.3L35.0 -4.3L35.4 -6.4L35.6 -8.5L35.7 -10.7L35.6 -12.9L35.4 -15.1L35.1 -17.4L34.6 -19.6L34.0 -21.9L33.3 -24.1L32.4 -26.3L31.3 -28.5L30.1 -30.7L28.8 -32.8L27.3 -34.9L25.6 -36.9L23.9 -38.8L22.0 -40.7L19.9 -42.4L17.8 -44.1L15.5 -45.6L13.1 -47.0L10.6 -48.3L7.9 -49.4L5.2 -50.4L2.4 -51.3L-0.5 -52.0L-3.4 -52.5L-6.4 -52.9L-9.5 -53.1L-12.6 -53.1L-15.7 -52.9L-18.9 -52.6L-22.1 -52.0L-25.2 -51.3L-28.4 -50.3L-28.9 -50.1L-29.3 -49.8L-29.8 -49.5L-30.3 -49.2L-30.8 -48.9L-31.3 -48.6L-31.8 -48.3L-32.2 -48.0L-32.2 -48.0L-29.2 -49.1L-26.1 -50.1L-23.0 -50.9L-19.8 -51.5L-16.7 -51.9L-13.6 -52.2L-10.6 -52.2L-7.5 -52.1L-4.5 -51.8L-1.6 -51.3L1.2 -50.7L4.0 -49.9L6.7 -49.0L9.3 -47.9L11.9 -46.7L14.3 -45.3L16.5 -43.8L18.7 -42.3L20.8 -40.6L22.7 -38.8L24.5 -36.9L26.1 -35.0L27.6 -33.0L29.0 -30.9L30.2 -28.8L31.3 -26.7L32.2 -24.5L33.0 -22.3L33.6 -20.1L34.1 -17.8L34.5 -15.6L34.7 -13.5L34.8 -11.3L34.8 -9.2L34.6 -7.1L34.3 -5.0L33.9 -3.0L33.4 -1.1L32.7 0.7L32.0 2.5L31.2 4.2L30.3 5.8L29.3 7.4L28.2 8.8L27.1 10.1L25.9 11.4L24.6 12.5L23.3 13.6L22.0 14.5L20.6 15.3L19.2 16.0L17.8 16.6L16.4 17.2L15.0 17.6L13.6 17.9L12.3 18.1L10.9 18.2L9.6 18.2L8.3 18.1L7.0 17.9L5.8 17.7L4.6 17.4L3.5 17.0L2.5 16.5L1.5 16.0L0.5 15.4L-0.3 14.8L-1.1 14.1L-1.8 13.4L-2.4 12.6L-3.0 11.8L-3.4 11.0L-3.8 10.2L-4.1 9.4L-4.3 8.6L-4.5 7.8L-4.6 7.0L-4.6 6.2L-4.5 5.4L-4.4 4.7L-4.2 4.0L-3.9 3.3L-3.6 2.7L-3.2 2.2L-2.8 1.7L-2.3 1.2L-1.8 0.8L-1.2 0.5L-0.6 0.2L-0.0 0.0Z" fill-opacity="0.056"/>
<path d="M0.0 0.0L0.2 0.6L0.4 1.2L0.7 1.8L1.1 2.3L1.6 2.8L2.1 3.3L2.6 3.7L3.2 4.0L3.9 4.3L4.6 4.5L5.3 4.7L6.0 4.8L6.8 4.8L7.6 4.7L8.5 4.6L9.3 4.4L10.1 4.1L10.9 3.8L11.7 3.3L12.5 2.8L13.3 2.2L14.0 1.5L14.7 0.8L15.4 -0.1L16.0 -1.0L16.6 -1.9L17.1 -3.0L17.5 -4.1L17.9 -5.2L18.2 -6.4L18.4 -7.7L18.5 -9.0L18.5 -10.3L18.4 -11.7L18.3 -13.1L18.0 -14.5L17.7 -15.9L17.2 -17.3L16.6 -18.7L16.0 -20.1L15.2 -21.5L14.3 -22.9L13.3 -24.2L12.2 -25.5L11.0 -26.7L9.7 -27.9L8.3 -29.0L6.8 -30.1L5.2 -31.0L3.5 -31.9L1.8 -32.7L-0.1 -33.4L-2.0 -34.0L-3.9 -34.4L-6.0 -34.8L-8.1 -35.0L-10.2 -35.1L-12.4 -35.1L-14.6 -35.0L-16.8 -34.7L-19.0 -34.2L-21.2 -33.7L-23.4 -33.0L-25.7 -32.1L-27.8 -31.1L-30.0 -29.9L-32.1 -28.6L-34.2 -27.2L-36.1 -25.6L-38.1 -23.9L-39.9 -22.0L-41.7 -20.0L-43.3 -17.9L-44.8 -15.7L-46.3 -13.3L-47.6 -10.8L-48.7 -8.3L-49.8 -5.6L-50.6 -2.8L-51.4 -0.0L-51.9 2.9L-52.3 5.9L-52.5 8.9L-52.6 12.0L-52.4 15.1L-52.1 18.2L-51.6 21.3L-50.9 24.5L-50.0 27.6L-48.9 30.7L-48.8 30.9L-48.7 31.1L-48.6 31.3L-48.5 31.5L-48.3 31.7L-48.2 31.8L-48.1 32.0L-48.0 32.2L-48.0 32.2L-49.1 29.2L-50.1 26.1L-50.9 23.0L-51.5 19.8L-51.9 16.7L-52.2 13.6L-52.2 10.6L-52.1 7.5L-51.8 4.5L-51.3 1.6L-50.7 -1.2L-49.9 -4.0L-49.0 -6.7L-47.9 -9.3L-46.7 -11.9L-45.3 -14.3L-43.8 -16.5L-42.3 -18.7L-40.6 -20.8L-38.8 -22.7L-36.9 -24.5L-35.0 -26.1L-33.0 -27.6L-30.9 -29.0L-28.8 -30.2L-26.7 -31.3L-24.5 -32.2L-22.3 -33.0L-20.1 -33.6L-17.8 -34.1L-15.6 -34.5L-13.5 -34.7L-11.3 -34.8L-9.2 -34.8L-7.1 -34.6L-5.0 -34.3L-3.0 -33.9L-1.1 -33.4L0.7 -32.7L2.5 -32.0L4.2 -31.2L5.8 -30.3L7.4 -29.3L8.8 -28.2L10.1 -27.1L11.4 -25.9L12.5 -24.6L13.6 -23.3L14.5 -22.0L15.3 -20.6L16.0 -19.2L16.6 -17.8L17.2 -16.4L17.6 -15.0L17.9 -13.6L18.1 -12.3L18.2 -10.9L18.2 -9.6L18.1 -8.3L17.9 -7.0L17.7 -5.8L17.4 -4.6L17.0 -3.5L16.5 -2.5L16.0 -1.5L15.4 -0.5L14.8 0.3L14.1 1.1L13.4 1.8L12.6 2.4L11.8 3.0L11.0 3.4L10.2 3.8L9.4 4.1L8.6 4.3L7.8 4.5L7.0 4.6L6.2 4.6L5.4 4.5L4.7 4.4L4.0 4.2L3.3 3.9L2.7 3.6L2.2 3.2L1.7 2.8L1.2 2.3L0.8 1.8L0.5 1.2L0.2 0.6L0.0 0.0ZM-0.0 -0.0L-0.2 -0.6L-0.4 -1.2L-0.7 -1.8L-1.1 -2.3L-1.6 -2.8L-2.1 -3.3L-2.6 -3.7L-3.2 -4.0L-3.9 -4.3L-4.6 -4.5L-5.3 -4.7L-6.0 -4.8L-6.8 -4.8L-7.6 -4.7L-8.5 -4.6L-9.3 -4.4L-10.1 -4.1L-10.9 -3.8L-11.7 -3.3L-12.5 -2.8L-13.3 -2.2L-14.0 -1.5L-14.7 -0.8L-15.4 0.1L-16.0 1.0L-16.6 1.9L-17.1 3.0L-17.5 4.1L-17.9 5.2L-18.2 6.4L-18.4 7.7L-18.5 9.0L-18.5 10.3L-18.4 11.7L-18.3 13.1L-18.0 14.5L-17.7 15.9L-17.2 17.3L-16.6 18.7L-16.0 20.1L-15.2 21.5L-14.3 22.9L-13.3 24.2L-12.2 25.5L-11.0 26.7L-9.7 27.9L-8.3 29.0L-6.8 30.1L-5.2 31.0L-3.5 31.9L-1.8 32.7L0.1 33.4L2.0 34.0L3.9 34.4L6.0 34.8L8.1 35.0L10.2 35.1L12.4 35.1L14.6 35.0L16.8 34.7L19.0 34.2L21.2 33.7L23.4 33.0L25.7 32.1L27.8 31.1L30.0 29.9L32.1 28.6L34.2 27.2L36.1 25.6L38.1 23.9L39.9 22.0L41.7 20.0L43.3 17.9L44.8 15.7L46.3 13.3L47.6 10.8L48.7 8.3L49.8 5.6L50.6 2.8L51.4 0.0L51.9 -2.9L52.3 -5.9L52.5 -8.9L52.6 -12.0L52.4 -15.1L52.1 -18.2L51.6 -21.3L50.9 -24.5L50.0 -27.6L48.9 -30.7L48.8 -30.9L48.7 -31.1L48.6 -31.3L48.5 -31.5L48.3 -31.7L48.2 -31.8L48.1 -32.0L48.0 -32.2L48.0 -32.2L49.1 -29.2L50.1 -26.1L50.9 -23.0L51.5 -19.8L51.9 -16.7L52.2 -13.6L52.2 -10.6L52.1 -7.5L51.8 -4.5L51.3 -1.6L50.7 1.2L49.9 4.0L49.0 6.7L47.9 9.3L46.7 11.9L45.3 14.3L43.8 16.5L42.3 18.7L40.6 20.8L38.8 22.7L36.9 24.5L35.0 26.1L33.0 27.6L30.9 29.0L28.8 30.2L26.7 31.3L24.5 32.2L22.3 33.0L20.1 33.6L17.8 34.1L15.6 34.5L13.5 34.7L11.3 34.8L9.2 34.8L7.1 34.6L5.0 34.3L3.0 33.9L1.1 33.4L-0.7 32.7L-2.5 32.0L-4.2 31.2L-5.8 30.3L-7.4 29.3L-8.8 28.2L-10.1 27.1L-11.4 25.9L-12.5 24.6L-13.6 23.3L-14.5 22.0L-15.3 20.6L-16.0 19.2L-16.6 17.8L-17.2 16.4L-17.6 15.0L-17.9 13.6L-18.1 12.3L-18.2 10.9L-18.2 9.6L-18.1 8.3L-17.9 7.0L-17.7 5.8L-17.4 4.6L-17.0 3.5L-16.5 2.5L-16.0 1.5L-15.4 0.5L-14.8 -0.3L-14.1 -1.1L-13.4 -1.8L-12.6 -2.4L-11.8 -3.0L-11.0 -3.4L-10.2 -3.8L-9.4 -4.1L-8.6 -4.3L-7.8 -4.5L-7.0 -4.6L-6.2 -4.6L-5.4 -4.5L-4.7 -4.4L-4.0 -4.2L-3.3 -3.9L-2.7 -3.6L-2.2 -3.2L-1.7 -2.8L-1.2 -2.3L-0.8 -1.8L-0.5 -1.2L-0.2 -0.6L-0.0 -0.0Z" fill-opacity="0.24"/>
<path d="M0.0 -0.0L0.6 -0.2L1.2 -0.4L1.8 -0.7L2.3 -1.1L2.8 -1.6L3.3 -2.1L3.7 -2.6L4.0 -3.2L4.3 -3.9L4.5 -4.6L4.7 -5.3L4.8 -6.0L4.8 -6.8L4.7 -7.6L4.6 -8.5L4.4 -9.3L4.1 -10.1L3.8 -10.9L3.3 -11.7L2.8 -12.5L2.2 -13.3L1.5 -14.0L0.8 -14.7L-0.1 -15.4L-1.0 -16.0L-1.9 -16.6L-3.0 -17.1L-4.1 -17.5L-5.2 -17.9L-6.4 -18.2L-7.7 -18.4L-9.0 -18.5L-10.3 -18.5L-11.7 -18.4L-13.1 -18.3L-14.5 -18.0L-15.9 -17.7L-17.3 -17.2L-18.7 -16.6L-20.1 -16.0L-21.5 -15.2L-22.9 -14.3L-24.2 -13.3L-25.5 -12.2L-26.7 -11.0L-27.9 -9.7L-29.0 -8.3L-30.1 -6.8L-31.0 -5.2L-31.9 -3.5L-32.7 -1.8L-33.4 0.1L-34.0 2.0L-34.4 3.9L-34.8 6.0L-35.0 8.1L-35.1 10.2L-35.1 12.4L-35.0 14.6L-34.7 16.8L-34.2 19.0L-33.7 21.2L-33.0 23.4L-32.1 25.7L-31.1 27.8L-29.9 30.0L-28.6 32.1L-27.2 34.2L-25.6 36.1L-23.9 38.1L-22.0 39.9L-20.0 41.7L-17.9 43.3L-15.7 44.8L-13.3 46.3L-10.8 47.6L-8.3 48.7L-5.6 49.8L-2.8 50.6L-0.0 51.4L2.9 51.9L5.9 52.3L8.9 52.5L12.0 52.6L15.1 52.4L18.2 52.1L21.3 51.6L24.5 50.9L27.6 50.0L30.7 48.9L30.9 48.8L31.1 48.7L31.3 48.6L31.5 48.5L31.7 48.3L31.8 48.2L32.0 48.1L32.2 48.0L32.2 48.0L29.2 49.1L26.1 50.1L23.0 50.9L19.8 51.5L16.7 51.9L13.6 52.2L10.6 52.2L7.5 52.1L4.5 51.8L1.6 51.3L-1.2 50.7L-4.0 49.9L-6.7 49.0L-9.3 47.9L-11.9 46.7L-14.3 45.3L-16.5 43.8L-18.7 42.3L-20.8 40.6L-22.7 38.8L-24.5 36.9L-26.1 35.0L-27.6 33.0L-29.0 30.9L-30.2 28.8L-31.3 26.7L-32.2 24.5L-33.0 22.3L-33.6 20.1L-34.1 17.8L-34.5 15.6L-34.7 13.5L-34.8 11.3L-34.8 9.2L-34.6 7.1L-34.3 5.0L-33.9 3.0L-33.4 1.1L-32.7 -0.7L-32.0 -2.5L-31.2 -4.2L-30.3 -5.8L-29.3 -7.4L-28.2 -8.8L-27.1 -10.1L-25.9 -11.4L-24.6 -12.5L-23.3 -13.6L-22.0 -14.5L-20.6 -15.3L-19.2 -16.0L-17.8 -16.6L-16.4 -17.2L-15.0 -17.6L-13.6 -17.9L-12.3 -18.1L-10.9 -18.2L-9.6 -18.2L-8.3 -18.1L-7.0 -17.9L-5.8 -17.7L-4.6 -17.4L-3.5 -17.0L-2.5 -16.5L-1.5 -16.0L-0.5 -15.4L0.3 -14.8L1.1 -14.1L1.8 -13.4L2.4 -12.6L3.0 -11.8L3.4 -11.0L3.8 -10.2L4.1 -9.4L4.3 -8.6L4.5 -7.8L4.6 -7.0L4.6 -6.2L4.5 -5.4L4.4 -4.7L4.2 -4.0L3.9 -3.3L3.6 -2.7L3.2 -2.2L2.8 -1.7L2.3 -1.2L1.8 -0.8L1.2 -0.5L0.6 -0.2L0.0 -0.0ZM-0.0 0.0L-0.6 0.2L-1.2 0.4L-1.8 0.7L-2.3 1.1L-2.8 1.6L-3.3 2.1L-3.7 2.6L-4.0 3.2L-4.3 3.9L-4.5 4.6L-4.7 5.3L-4.8 6.0L-4.8 6.8L-4.7 7.6L-4.6 8.5L-4.4 9.3L-4.1 10.1L-3.8 10.9L-3.3 11.7L-2.8 12.5L-2.2 13.3L-1.5 14.0L-0.8 14.7L0.1 15.4L1.0 16.0L1.9 16.6L3.0 17.1L4.1 17.5L5.2 17.9L6.4 18.2L7.7 18.4L9.0 18.5L10.3 18.5L11.7 18.4L13.1 18.3L14.5 18.0L15.9 17.7L17.3 17.2L18.7 16.6L20.1 16.0L21.5 15.2L22.9 14.3L24.2 13.3L25.5 12.2L26.7 11.0L27.9 9.7L29.0 8.3L30.1 6.8L31.0 5.2L31.9 3.5L32.7 1.8L33.4 -0.1L34.0 -2.0L34.4 -3.9L34.8 -6.0L35.0 -8.1L35.1 -10.2L35.1 -12.4L35.0 -14.6L34.7 -16.8L34.2 -19.0L33.7 -21.2L33.0 -23.4L32.1 -25.7L31.1 -27.8L29.9 -30.0L28.6 -32.1L27.2 -34.2L25.6 -36.1L23.9 -38.1L22.0 -39.9L20.0 -41.7L17.9 -43.3L15.7 -44.8L13.3 -46.3L10.8 -47.6L8.3 -48.7L5.6 -49.8L2.8 -50.6L0.0 -51.4L-2.9 -51.9L-5.9 -52.3L-8.9 -52.5L-12.0 -52.6L-15.1 -52.4L-18.2 -52.1L-21.3 -51.6L-24.5 -50.9L-27.6 -50.0L-30.7 -48.9L-30.9 -48.8L-31.1 -48.7L-31.3 -48.6L-31.5 -48.5L-31.7 -48.3L-31.8 -48.2L-32.0 -48.1L-32.2 -48.0L-32.2 -48.0L-29.2 -49.1L-26.1 -50.1L-23.0 -50.9L-19.8 -51.5L-16.7 -51.9L-13.6 -52.2L-10.6 -52.2L-7.5 -52.1L-4.5 -51.8L-1.6 -51.3L1.2 -50.7L4.0 -49.9L6.7 -49.0L9.3 -47.9L11.9 -46.7L14.3 -45.3L16.5 -43.8L18.7 -42.3L20.8 -40.6L22.7 -38.8L24.5 -36.9L26.1 -35.0L27.6 -33.0L29.0 -30.9L30.2 -28.8L31.3 -26.7L32.2 -24.5L33.0 -22.3L33.6 -20.1L34.1 -17.8L34.5 -15.6L34.7 -13.5L34.8 -11.3L34.8 -9.2L34.6 -7.1L34.3 -5.0L33.9 -3.0L33.4 -1.1L32.7 0.7L32.0 2.5L31.2 4.2L30.3 5.8L29.3 7.4L28.2 8.8L27.1 10.1L25.9 11.4L24.6 12.5L23.3 13.6L22.0 14.5L20.6 15.3L19.2 16.0L17.8 16.6L16.4 17.2L15.0 17.6L13.6 17.9L12.3 18.1L10.9 18.2L9.6 18.2L8.3 18.1L7.0 17.9L5.8 17.7L4.6 17.4L3.5 17.0L2.5 16.5L1.5 16.0L0.5 15.4L-0.3 14.8L-1.1 14.1L-1.8 13.4L-2.4 12.6L-3.0 11.8L-3.4 11.0L-3.8 10.2L-4.1 9.4L-4.3 8.6L-4.5 7.8L-4.6 7.0L-4.6 6.2L-4.5 5.4L-4.4 4.7L-4.2 4.0L-3.9 3.3L-3.6 2.7L-3.2 2.2L-2.8 1.7L-2.3 1.2L-1.8 0.8L-1.2 0.5L-0.6 0.2L-0.0 0.0Z" fill-opacity="0.084"/>
</g></g></g>
<g id="big"><circle r="63.9" fill="#2a4000" fill-opacity="0.7" filter="url(#bl)"/>
<circle r="62.4" fill="#9dbd29"/>
<circle r="54.7" fill="#3a5800" fill-opacity="0.5" filter="url(#bl)"/>
<use href="#inr"/></g>
</defs>
<rect x="34" y="42" width="753" height="423" fill="#59801d"/>
<use href="#drk" x="-19.9" y="0.8"/>
<use href="#drk" x="-19.9" y="173.2"/>
<use href="#drk" x="-19.9" y="345.6"/>
<use href="#drk" x="-19.9" y="518.0"/>
<use href="#drk" x="66.3" y="87.0"/>
<use href="#drk" x="66.3" y="259.4"/>
<use href="#drk" x="66.3" y="431.8"/>
<use href="#drk" x="152.5" y="0.8"/>
<use href="#drk" x="152.5" y="173.2"/>
<use href="#drk" x="152.5" y="345.6"/>
<use href="#drk" x="152.5" y="518.0"/>
<use href="#drk" x="238.7" y="87.0"/>
<use href="#drk" x="238.7" y="259.4"/>
<use href="#drk" x="238.7" y="431.8"/>
<use href="#drk" x="324.9" y="0.8"/>
<use href="#drk" x="324.9" y="173.2"/>
<use href="#drk" x="324.9" y="345.6"/>
<use href="#drk" x="324.9" y="518.0"/>
<use href="#drk" x="411.1" y="87.0"/>
<use href="#drk" x="411.1" y="259.4"/>
<use href="#drk" x="411.1" y="431.8"/>
<use href="#drk" x="497.3" y="0.8"/>
<use href="#drk" x="497.3" y="173.2"/>
<use href="#drk" x="497.3" y="345.6"/>
<use href="#drk" x="497.3" y="518.0"/>
<use href="#drk" x="583.5" y="87.0"/>
<use href="#drk" x="583.5" y="259.4"/>
<use href="#drk" x="583.5" y="431.8"/>
<use href="#drk" x="669.7" y="0.8"/>
<use href="#drk" x="669.7" y="173.2"/>
<use href="#drk" x="669.7" y="345.6"/>
<use href="#drk" x="669.7" y="518.0"/>
<use href="#drk" x="755.9" y="87.0"/>
<use href="#drk" x="755.9" y="259.4"/>
<use href="#drk" x="755.9" y="431.8"/>
<use href="#drk" x="842.1" y="0.8"/>
<use href="#drk" x="842.1" y="173.2"/>
<use href="#drk" x="842.1" y="345.6"/>
<use href="#drk" x="842.1" y="518.0"/>
<use href="#big" x="-19.9" y="87.0"/>
<use href="#big" x="-19.9" y="259.4"/>
<use href="#big" x="-19.9" y="431.8"/>
<use href="#big" x="66.3" y="0.8"/>
<use href="#big" x="66.3" y="173.2"/>
<use href="#big" x="66.3" y="345.6"/>
<use href="#big" x="66.3" y="518.0"/>
<use href="#big" x="152.5" y="87.0"/>
<use href="#big" x="152.5" y="259.4"/>
<use href="#big" x="152.5" y="431.8"/>
<use href="#big" x="238.7" y="0.8"/>
<use href="#big" x="238.7" y="173.2"/>
<use href="#big" x="238.7" y="345.6"/>
<use href="#big" x="238.7" y="518.0"/>
<use href="#big" x="324.9" y="87.0"/>
<use href="#big" x="324.9" y="259.4"/>
<use href="#big" x="324.9" y="431.8"/>
<use href="#big" x="411.1" y="0.8"/>
<use href="#big" x="411.1" y="173.2"/>
<use href="#big" x="411.1" y="345.6"/>
<use href="#big" x="411.1" y="518.0"/>
<use href="#big" x="497.3" y="87.0"/>
<use href="#big" x="497.3" y="259.4"/>
<use href="#big" x="497.3" y="431.8"/>
<use href="#big" x="583.5" y="0.8"/>
<use href="#big" x="583.5" y="173.2"/>
<use href="#big" x="583.5" y="345.6"/>
<use href="#big" x="583.5" y="518.0"/>
<use href="#big" x="669.7" y="87.0"/>
<use href="#big" x="669.7" y="259.4"/>
<use href="#big" x="669.7" y="431.8"/>
<use href="#big" x="755.9" y="0.8"/>
<use href="#big" x="755.9" y="173.2"/>
<use href="#big" x="755.9" y="345.6"/>
<use href="#big" x="755.9" y="518.0"/>
<use href="#big" x="842.1" y="87.0"/>
<use href="#big" x="842.1" y="259.4"/>
<use href="#big" x="842.1" y="431.8"/>
</svg>
<svg width="173" height="97" viewBox="354 368 173 97" style="position:absolute;left:354px;top:368px">
<rect x="354" y="368" width="173" height="97" fill="#59801d"/>
<use href="#drk" x="354.3" y="367.3"/>
<use href="#drk" x="440.5" y="453.5"/>
<use href="#drk" x="526.7" y="367.3"/>
<use href="#big" x="354.3" y="453.5"/>
<use href="#big" x="440.5" y="367.3"/>
<use href="#big" x="526.7" y="453.5"/>
</svg>
<div class="chk" style="left:497px;top:42px;width:290px;height:131px;background-position:6px 0px"></div>
<div class="chk" style="left:670px;top:173px;width:117px;height:172px;background-position:1px 2px"></div>
<div class="chk" style="left:325px;top:345px;width:462px;height:23px;background-position:3px 5px"></div>
<div class="chk" style="left:325px;top:368px;width:29px;height:97px;background-position:3px 3px"></div>
<div class="chk" style="left:527px;top:368px;width:260px;height:97px;background-position:4px 3px"></div>
</body></html>
